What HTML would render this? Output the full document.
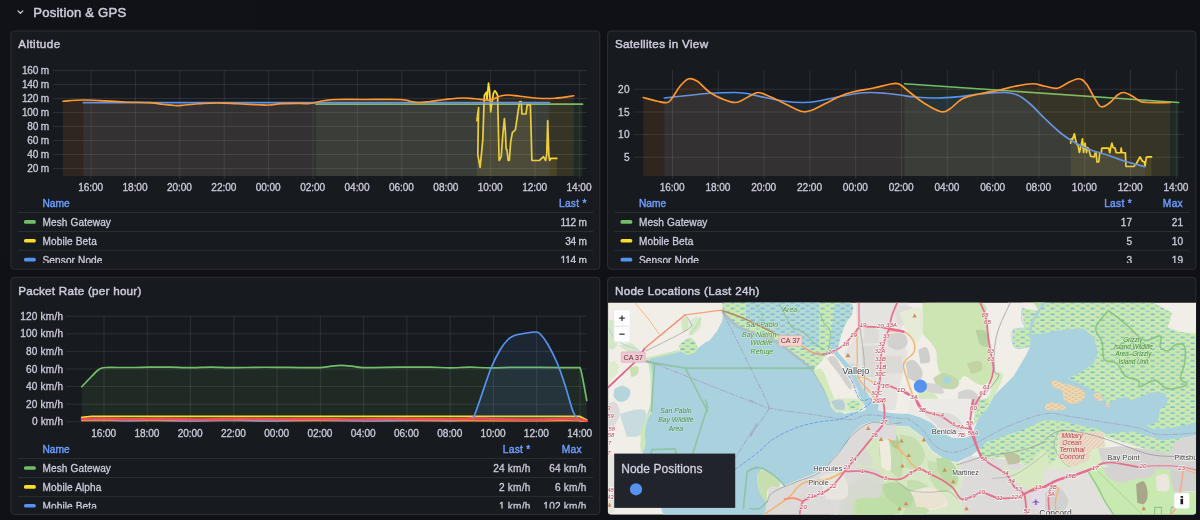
<!DOCTYPE html>
<html><head><meta charset="utf-8"><title>Position &amp; GPS</title>
<style>html,body{margin:0;padding:0;background:#111217;width:1200px;height:520px;overflow:hidden;font-family:"Liberation Sans",sans-serif}</style>
</head><body>
<svg width="1200" height="520" viewBox="0 0 1200 520" style="display:block;font-family:'Liberation Sans',sans-serif;will-change:transform;opacity:0.999">
<rect width="1200" height="520" fill="#111217"/>
<defs>
<clipPath id="lc1"><rect x="11" y="190" width="589" height="73"/></clipPath>
<clipPath id="lc2"><rect x="608" y="190" width="589" height="73"/></clipPath>
<clipPath id="lc3"><rect x="11" y="436" width="589" height="72.6"/></clipPath>
<clipPath id="mapclip"><path d="M608.1,302.8 H1196 V511.6 a3,3 0 0 1 -3,3 H611.1 a3,3 0 0 1 -3,-3 Z"/></clipPath>
<pattern id="wet" width="10" height="5.8" patternUnits="userSpaceOnUse"><rect width="10" height="5.8" fill="#cdebb0"/><rect x="0.5" y="0.6" width="4.2" height="1.0" fill="#3f97ea" opacity="0.9"/><rect x="5.6" y="3.5" width="4.0" height="1.0" fill="#5fa8e8" opacity="0.7"/></pattern>
<pattern id="wetb" width="10" height="5.8" patternUnits="userSpaceOnUse"><rect width="10" height="5.8" fill="#b6dbd4"/><rect x="0.5" y="0.6" width="4.4" height="1.0" fill="#4f9fe6" opacity="0.85"/><rect x="5.6" y="3.5" width="4.2" height="1.0" fill="#4f9fe6" opacity="0.7"/></pattern>
<pattern id="isl" width="7" height="4" patternUnits="userSpaceOnUse"><rect width="7" height="4" fill="#e9d9b6"/><rect x="0.5" y="0.8" width="3" height="0.8" fill="#e8a060" opacity="0.7"/><rect x="4" y="2.8" width="2.5" height="0.8" fill="#e8a060" opacity="0.7"/></pattern>
<pattern id="mil" width="3" height="3" patternUnits="userSpaceOnUse" patternTransform="rotate(45)"><rect width="3" height="3" fill="#ecdfc9"/><rect width="1" height="3" fill="#e8a9a0" opacity="0.45"/></pattern>
</defs>
<path d="M18.0,10.9 L20.4,13.3 L22.8,10.9" fill="none" stroke="#ccccdc" stroke-width="1.3" stroke-linecap="round" stroke-linejoin="round"/>
<text x="33.3" y="16.9" style="font-size:13.1px;fill:#ccccdc;stroke:#ccccdc;stroke-width:0.5px;letter-spacing:0.2px;" >Position &amp; GPS</text>
<rect x="10.9" y="31.0" width="588.9" height="238.3" rx="3.4" fill="#181b1f" stroke="#2d3037" stroke-width="1"/>
<text x="18.2" y="48.4" style="font-size:11.7px;fill:#ccccdc;stroke:#ccccdc;stroke-width:0.45px;" textLength="42.0" lengthAdjust="spacing">Altitude</text>
<rect x="607.6" y="31.0" width="588.3" height="238.3" rx="3.4" fill="#181b1f" stroke="#2d3037" stroke-width="1"/>
<text x="614.9" y="48.4" style="font-size:11.7px;fill:#ccccdc;stroke:#ccccdc;stroke-width:0.45px;" textLength="93.2" lengthAdjust="spacing">Satellites in View</text>
<rect x="10.9" y="277.3" width="588.9" height="237.2" rx="3.4" fill="#181b1f" stroke="#2d3037" stroke-width="1"/>
<text x="18.2" y="294.7" style="font-size:11.7px;fill:#ccccdc;stroke:#ccccdc;stroke-width:0.45px;" textLength="123.2" lengthAdjust="spacing">Packet Rate (per hour)</text>
<rect x="607.6" y="277.3" width="588.3" height="237.2" rx="3.4" fill="#181b1f" stroke="#2d3037" stroke-width="1"/>
<text x="614.9" y="294.7" style="font-size:11.7px;fill:#ccccdc;stroke:#ccccdc;stroke-width:0.45px;" textLength="144.6" lengthAdjust="spacing">Node Locations (Last 24h)</text>
<rect x="53" y="70.00" width="534.00" height="1" fill="rgba(240,250,255,0.10)"/>
<rect x="53" y="84.00" width="534.00" height="1" fill="rgba(240,250,255,0.10)"/>
<rect x="53" y="98.00" width="534.00" height="1" fill="rgba(240,250,255,0.10)"/>
<rect x="53" y="112.00" width="534.00" height="1" fill="rgba(240,250,255,0.10)"/>
<rect x="53" y="126.00" width="534.00" height="1" fill="rgba(240,250,255,0.10)"/>
<rect x="53" y="140.00" width="534.00" height="1" fill="rgba(240,250,255,0.10)"/>
<rect x="53" y="154.00" width="534.00" height="1" fill="rgba(240,250,255,0.10)"/>
<rect x="53" y="168.00" width="534.00" height="1" fill="rgba(240,250,255,0.10)"/>
<rect x="90.50" y="70.50" width="1" height="108.50" fill="rgba(240,250,255,0.10)"/>
<rect x="134.90" y="70.50" width="1" height="108.50" fill="rgba(240,250,255,0.10)"/>
<rect x="179.30" y="70.50" width="1" height="108.50" fill="rgba(240,250,255,0.10)"/>
<rect x="223.70" y="70.50" width="1" height="108.50" fill="rgba(240,250,255,0.10)"/>
<rect x="268.10" y="70.50" width="1" height="108.50" fill="rgba(240,250,255,0.10)"/>
<rect x="312.50" y="70.50" width="1" height="108.50" fill="rgba(240,250,255,0.10)"/>
<rect x="356.90" y="70.50" width="1" height="108.50" fill="rgba(240,250,255,0.10)"/>
<rect x="401.30" y="70.50" width="1" height="108.50" fill="rgba(240,250,255,0.10)"/>
<rect x="445.70" y="70.50" width="1" height="108.50" fill="rgba(240,250,255,0.10)"/>
<rect x="490.10" y="70.50" width="1" height="108.50" fill="rgba(240,250,255,0.10)"/>
<rect x="534.50" y="70.50" width="1" height="108.50" fill="rgba(240,250,255,0.10)"/>
<rect x="578.90" y="70.50" width="1" height="108.50" fill="rgba(240,250,255,0.10)"/>
<text x="49.0" y="74.1" text-anchor="end" style="font-size:10.1px;fill:#ccccdc;stroke:#ccccdc;stroke-width:0.3px;letter-spacing:-0.2px;" >160 m</text>
<text x="49.0" y="88.1" text-anchor="end" style="font-size:10.1px;fill:#ccccdc;stroke:#ccccdc;stroke-width:0.3px;letter-spacing:-0.2px;" >140 m</text>
<text x="49.0" y="102.1" text-anchor="end" style="font-size:10.1px;fill:#ccccdc;stroke:#ccccdc;stroke-width:0.3px;letter-spacing:-0.2px;" >120 m</text>
<text x="49.0" y="116.1" text-anchor="end" style="font-size:10.1px;fill:#ccccdc;stroke:#ccccdc;stroke-width:0.3px;letter-spacing:-0.2px;" >100 m</text>
<text x="49.0" y="130.1" text-anchor="end" style="font-size:10.1px;fill:#ccccdc;stroke:#ccccdc;stroke-width:0.3px;letter-spacing:-0.2px;" >80 m</text>
<text x="49.0" y="144.1" text-anchor="end" style="font-size:10.1px;fill:#ccccdc;stroke:#ccccdc;stroke-width:0.3px;letter-spacing:-0.2px;" >60 m</text>
<text x="49.0" y="158.1" text-anchor="end" style="font-size:10.1px;fill:#ccccdc;stroke:#ccccdc;stroke-width:0.3px;letter-spacing:-0.2px;" >40 m</text>
<text x="49.0" y="172.1" text-anchor="end" style="font-size:10.1px;fill:#ccccdc;stroke:#ccccdc;stroke-width:0.3px;letter-spacing:-0.2px;" >20 m</text>
<text x="90.6" y="191.2" text-anchor="middle" style="font-size:10.1px;fill:#ccccdc;stroke:#ccccdc;stroke-width:0.3px;letter-spacing:-0.08px;" >16:00</text>
<text x="135.0" y="191.2" text-anchor="middle" style="font-size:10.1px;fill:#ccccdc;stroke:#ccccdc;stroke-width:0.3px;letter-spacing:-0.08px;" >18:00</text>
<text x="179.4" y="191.2" text-anchor="middle" style="font-size:10.1px;fill:#ccccdc;stroke:#ccccdc;stroke-width:0.3px;letter-spacing:-0.08px;" >20:00</text>
<text x="223.79999999999998" y="191.2" text-anchor="middle" style="font-size:10.1px;fill:#ccccdc;stroke:#ccccdc;stroke-width:0.3px;letter-spacing:-0.08px;" >22:00</text>
<text x="268.20000000000005" y="191.2" text-anchor="middle" style="font-size:10.1px;fill:#ccccdc;stroke:#ccccdc;stroke-width:0.3px;letter-spacing:-0.08px;" >00:00</text>
<text x="312.6" y="191.2" text-anchor="middle" style="font-size:10.1px;fill:#ccccdc;stroke:#ccccdc;stroke-width:0.3px;letter-spacing:-0.08px;" >02:00</text>
<text x="357.0" y="191.2" text-anchor="middle" style="font-size:10.1px;fill:#ccccdc;stroke:#ccccdc;stroke-width:0.3px;letter-spacing:-0.08px;" >04:00</text>
<text x="401.40000000000003" y="191.2" text-anchor="middle" style="font-size:10.1px;fill:#ccccdc;stroke:#ccccdc;stroke-width:0.3px;letter-spacing:-0.08px;" >06:00</text>
<text x="445.8" y="191.2" text-anchor="middle" style="font-size:10.1px;fill:#ccccdc;stroke:#ccccdc;stroke-width:0.3px;letter-spacing:-0.08px;" >08:00</text>
<text x="490.2" y="191.2" text-anchor="middle" style="font-size:10.1px;fill:#ccccdc;stroke:#ccccdc;stroke-width:0.3px;letter-spacing:-0.08px;" >10:00</text>
<text x="534.6" y="191.2" text-anchor="middle" style="font-size:10.1px;fill:#ccccdc;stroke:#ccccdc;stroke-width:0.3px;letter-spacing:-0.08px;" >12:00</text>
<text x="579.0" y="191.2" text-anchor="middle" style="font-size:10.1px;fill:#ccccdc;stroke:#ccccdc;stroke-width:0.3px;letter-spacing:-0.08px;" >14:00</text>
<path d="M316,104.2 L582.5,104.2 L582.50,176 L316.00,176 Z" fill="#73bf69" fill-opacity="0.1" stroke="none"/>
<path d="M316,104.2 L582.5,104.2" fill="none" stroke="#73bf69" stroke-width="1.7" stroke-linejoin="round" stroke-linecap="round"/>
<path d="M476.90,120.70 L478.60,107.60 L477.80,154.60 L480.10,167.30 L482.80,139.80 L484.30,95.40 L486.40,92.20 L487.00,99.60 L488.50,83.10 L489.60,91.10 L490.70,111.90 L492.10,101.70 L493.40,93.30 L494.90,90.70 L496.40,92.80 L497.60,95.40 L498.50,133.40 L499.10,160.50 L501.20,156.70 L502.90,133.40 L504.40,118.60 L505.50,133.40 L506.10,149.30 L506.90,149.30 L508.20,160.50 L509.30,160.50 L510.70,141.90 L512.40,132.40 L513.90,131.30 L515.40,129.60 L517.50,115.50 L519.60,101.70 L521.30,101.70 L521.90,114.00 L526.00,114.00 L527.20,104.90 L530.40,104.90 L531.90,160.50 L539.30,160.50 L543.50,156.70 L545.60,160.50 L546.70,154.60 L547.70,120.70 L548.80,154.60 L549.60,160.50 L550.90,158.40 L556.80,158.40 L556.80,176 L476.90,176 Z" fill="#fade2a" fill-opacity="0.1" stroke="none"/>
<path d="M476.90,120.70 L478.60,107.60 L477.80,154.60 L480.10,167.30 L482.80,139.80 L484.30,95.40 L486.40,92.20 L487.00,99.60 L488.50,83.10 L489.60,91.10 L490.70,111.90 L492.10,101.70 L493.40,93.30 L494.90,90.70 L496.40,92.80 L497.60,95.40 L498.50,133.40 L499.10,160.50 L501.20,156.70 L502.90,133.40 L504.40,118.60 L505.50,133.40 L506.10,149.30 L506.90,149.30 L508.20,160.50 L509.30,160.50 L510.70,141.90 L512.40,132.40 L513.90,131.30 L515.40,129.60 L517.50,115.50 L519.60,101.70 L521.30,101.70 L521.90,114.00 L526.00,114.00 L527.20,104.90 L530.40,104.90 L531.90,160.50 L539.30,160.50 L543.50,156.70 L545.60,160.50 L546.70,154.60 L547.70,120.70 L548.80,154.60 L549.60,160.50 L550.90,158.40 L556.80,158.40" fill="none" stroke="#fade2a" stroke-width="1.7" stroke-linejoin="round" stroke-linecap="round"/>
<path d="M83.3,102.6 L549.5,102.6 L549.50,176 L83.30,176 Z" fill="#5794f2" fill-opacity="0.1" stroke="none"/>
<path d="M83.3,102.6 L549.5,102.6" fill="none" stroke="#5794f2" stroke-width="1.7" stroke-linejoin="round" stroke-linecap="round"/>
<path d="M63.00,101.25 C66.90,101.00 75.10,100.13 82.50,100.00 C89.90,99.87 91.50,100.20 100.00,100.60 C108.50,101.00 115.00,101.60 125.00,102.00 C135.00,102.40 142.50,102.15 150.00,102.60 C157.50,103.05 157.50,103.67 162.50,104.25 C167.50,104.83 170.50,105.35 175.00,105.50 C179.50,105.65 180.00,105.35 185.00,105.00 C190.00,104.65 193.50,104.15 200.00,103.75 C206.50,103.35 210.00,103.00 217.50,103.00 C225.00,103.00 229.50,103.40 237.50,103.75 C245.50,104.10 251.25,104.50 257.50,104.75 C263.75,105.00 263.75,105.21 268.75,105.00 C273.75,104.79 276.25,104.02 282.50,103.70 C288.75,103.38 294.50,103.44 300.00,103.40 C305.50,103.36 305.00,104.08 310.00,103.50 C315.00,102.92 319.50,101.30 325.00,100.50 C330.50,99.70 330.00,99.70 337.50,99.50 C345.00,99.30 350.00,99.50 362.50,99.50 C375.00,99.50 390.50,99.15 400.00,99.50 C409.50,99.85 406.25,100.65 410.00,101.25 C413.75,101.85 414.75,102.45 418.75,102.50 C422.75,102.55 424.75,102.10 430.00,101.50 C435.25,100.90 438.50,100.20 445.00,99.50 C451.50,98.80 456.50,98.15 462.50,98.00 C468.50,97.85 469.50,98.35 475.00,98.75 C480.50,99.15 485.00,100.50 490.00,100.00 C495.00,99.50 496.50,97.25 500.00,96.25 C503.50,95.25 503.50,95.00 507.50,95.00 C511.50,95.00 514.00,95.60 520.00,96.25 C526.00,96.90 530.50,97.85 537.50,98.25 C544.50,98.65 547.75,98.75 555.00,98.25 C562.25,97.75 570.00,96.25 573.75,95.75 L573.75,176 L63.00,176 Z" fill="#ff9830" fill-opacity="0.1" stroke="none"/>
<path d="M63.00,101.25 C66.90,101.00 75.10,100.13 82.50,100.00 C89.90,99.87 91.50,100.20 100.00,100.60 C108.50,101.00 115.00,101.60 125.00,102.00 C135.00,102.40 142.50,102.15 150.00,102.60 C157.50,103.05 157.50,103.67 162.50,104.25 C167.50,104.83 170.50,105.35 175.00,105.50 C179.50,105.65 180.00,105.35 185.00,105.00 C190.00,104.65 193.50,104.15 200.00,103.75 C206.50,103.35 210.00,103.00 217.50,103.00 C225.00,103.00 229.50,103.40 237.50,103.75 C245.50,104.10 251.25,104.50 257.50,104.75 C263.75,105.00 263.75,105.21 268.75,105.00 C273.75,104.79 276.25,104.02 282.50,103.70 C288.75,103.38 294.50,103.44 300.00,103.40 C305.50,103.36 305.00,104.08 310.00,103.50 C315.00,102.92 319.50,101.30 325.00,100.50 C330.50,99.70 330.00,99.70 337.50,99.50 C345.00,99.30 350.00,99.50 362.50,99.50 C375.00,99.50 390.50,99.15 400.00,99.50 C409.50,99.85 406.25,100.65 410.00,101.25 C413.75,101.85 414.75,102.45 418.75,102.50 C422.75,102.55 424.75,102.10 430.00,101.50 C435.25,100.90 438.50,100.20 445.00,99.50 C451.50,98.80 456.50,98.15 462.50,98.00 C468.50,97.85 469.50,98.35 475.00,98.75 C480.50,99.15 485.00,100.50 490.00,100.00 C495.00,99.50 496.50,97.25 500.00,96.25 C503.50,95.25 503.50,95.00 507.50,95.00 C511.50,95.00 514.00,95.60 520.00,96.25 C526.00,96.90 530.50,97.85 537.50,98.25 C544.50,98.65 547.75,98.75 555.00,98.25 C562.25,97.75 570.00,96.25 573.75,95.75" fill="none" stroke="#ff9830" stroke-width="1.7" stroke-linejoin="round" stroke-linecap="round"/>
<g clip-path="url(#lc1)">
<text x="42.5" y="206.6" style="font-size:10.2px;fill:#6e9fff;stroke:#6e9fff;stroke-width:0.4px;letter-spacing:0.0px;" >Name</text>
<text x="586.8" y="206.6" text-anchor="end" style="font-size:10.2px;fill:#6e9fff;stroke:#6e9fff;stroke-width:0.4px;letter-spacing:0.3px;" >Last *</text>
<rect x="18" y="212.10" width="575" height="0.9" fill="rgba(204,204,220,0.13)"/>
<rect x="24" y="220.10" width="11.8" height="3.6" rx="1.5" fill="#73bf69"/>
<text x="42.5" y="226.2" style="font-size:10.1px;fill:#ccccdc;stroke:#ccccdc;stroke-width:0.3px;letter-spacing:0.1px;" >Mesh Gateway</text>
<text x="586.8" y="226.2" text-anchor="end" style="font-size:10.1px;fill:#ccccdc;stroke:#ccccdc;stroke-width:0.3px;letter-spacing:-0.2px;" >112 m</text>
<rect x="18" y="230.95" width="575" height="0.9" fill="rgba(204,204,220,0.13)"/>
<rect x="24" y="238.95" width="11.8" height="3.6" rx="1.5" fill="#fade2a"/>
<text x="42.5" y="245.04999999999998" style="font-size:10.1px;fill:#ccccdc;stroke:#ccccdc;stroke-width:0.3px;letter-spacing:0.1px;" >Mobile Beta</text>
<text x="586.8" y="245.04999999999998" text-anchor="end" style="font-size:10.1px;fill:#ccccdc;stroke:#ccccdc;stroke-width:0.3px;letter-spacing:-0.2px;" >34 m</text>
<rect x="18" y="249.80" width="575" height="0.9" fill="rgba(204,204,220,0.13)"/>
<rect x="24" y="257.80" width="11.8" height="3.6" rx="1.5" fill="#5794f2"/>
<text x="42.5" y="263.9" style="font-size:10.1px;fill:#ccccdc;stroke:#ccccdc;stroke-width:0.3px;letter-spacing:0.1px;" >Sensor Node</text>
<text x="586.8" y="263.9" text-anchor="end" style="font-size:10.1px;fill:#ccccdc;stroke:#ccccdc;stroke-width:0.3px;letter-spacing:-0.2px;" >114 m</text>
</g>
<rect x="633.75" y="88.75" width="550.00" height="1" fill="rgba(240,250,255,0.10)"/>
<rect x="633.75" y="111.50" width="550.00" height="1" fill="rgba(240,250,255,0.10)"/>
<rect x="633.75" y="134.10" width="550.00" height="1" fill="rgba(240,250,255,0.10)"/>
<rect x="633.75" y="156.80" width="550.00" height="1" fill="rgba(240,250,255,0.10)"/>
<rect x="672.00" y="70.00" width="1" height="109.00" fill="rgba(240,250,255,0.10)"/>
<rect x="717.80" y="70.00" width="1" height="109.00" fill="rgba(240,250,255,0.10)"/>
<rect x="763.60" y="70.00" width="1" height="109.00" fill="rgba(240,250,255,0.10)"/>
<rect x="809.40" y="70.00" width="1" height="109.00" fill="rgba(240,250,255,0.10)"/>
<rect x="855.20" y="70.00" width="1" height="109.00" fill="rgba(240,250,255,0.10)"/>
<rect x="901.00" y="70.00" width="1" height="109.00" fill="rgba(240,250,255,0.10)"/>
<rect x="946.80" y="70.00" width="1" height="109.00" fill="rgba(240,250,255,0.10)"/>
<rect x="992.60" y="70.00" width="1" height="109.00" fill="rgba(240,250,255,0.10)"/>
<rect x="1038.40" y="70.00" width="1" height="109.00" fill="rgba(240,250,255,0.10)"/>
<rect x="1084.20" y="70.00" width="1" height="109.00" fill="rgba(240,250,255,0.10)"/>
<rect x="1130.00" y="70.00" width="1" height="109.00" fill="rgba(240,250,255,0.10)"/>
<rect x="1175.80" y="70.00" width="1" height="109.00" fill="rgba(240,250,255,0.10)"/>
<text x="630.2" y="92.85" text-anchor="end" style="font-size:10.1px;fill:#ccccdc;stroke:#ccccdc;stroke-width:0.3px;letter-spacing:0.5px;" >20</text>
<text x="630.2" y="115.6" text-anchor="end" style="font-size:10.1px;fill:#ccccdc;stroke:#ccccdc;stroke-width:0.3px;letter-spacing:0.5px;" >15</text>
<text x="630.2" y="138.2" text-anchor="end" style="font-size:10.1px;fill:#ccccdc;stroke:#ccccdc;stroke-width:0.3px;letter-spacing:0.5px;" >10</text>
<text x="630.2" y="160.9" text-anchor="end" style="font-size:10.1px;fill:#ccccdc;stroke:#ccccdc;stroke-width:0.3px;letter-spacing:0.5px;" >5</text>
<text x="672.1" y="191.2" text-anchor="middle" style="font-size:10.1px;fill:#ccccdc;stroke:#ccccdc;stroke-width:0.3px;letter-spacing:-0.08px;" >16:00</text>
<text x="717.9" y="191.2" text-anchor="middle" style="font-size:10.1px;fill:#ccccdc;stroke:#ccccdc;stroke-width:0.3px;letter-spacing:-0.08px;" >18:00</text>
<text x="763.7" y="191.2" text-anchor="middle" style="font-size:10.1px;fill:#ccccdc;stroke:#ccccdc;stroke-width:0.3px;letter-spacing:-0.08px;" >20:00</text>
<text x="809.5" y="191.2" text-anchor="middle" style="font-size:10.1px;fill:#ccccdc;stroke:#ccccdc;stroke-width:0.3px;letter-spacing:-0.08px;" >22:00</text>
<text x="855.3000000000001" y="191.2" text-anchor="middle" style="font-size:10.1px;fill:#ccccdc;stroke:#ccccdc;stroke-width:0.3px;letter-spacing:-0.08px;" >00:00</text>
<text x="901.1" y="191.2" text-anchor="middle" style="font-size:10.1px;fill:#ccccdc;stroke:#ccccdc;stroke-width:0.3px;letter-spacing:-0.08px;" >02:00</text>
<text x="946.9" y="191.2" text-anchor="middle" style="font-size:10.1px;fill:#ccccdc;stroke:#ccccdc;stroke-width:0.3px;letter-spacing:-0.08px;" >04:00</text>
<text x="992.6999999999999" y="191.2" text-anchor="middle" style="font-size:10.1px;fill:#ccccdc;stroke:#ccccdc;stroke-width:0.3px;letter-spacing:-0.08px;" >06:00</text>
<text x="1038.5" y="191.2" text-anchor="middle" style="font-size:10.1px;fill:#ccccdc;stroke:#ccccdc;stroke-width:0.3px;letter-spacing:-0.08px;" >08:00</text>
<text x="1084.3" y="191.2" text-anchor="middle" style="font-size:10.1px;fill:#ccccdc;stroke:#ccccdc;stroke-width:0.3px;letter-spacing:-0.08px;" >10:00</text>
<text x="1130.1" y="191.2" text-anchor="middle" style="font-size:10.1px;fill:#ccccdc;stroke:#ccccdc;stroke-width:0.3px;letter-spacing:-0.08px;" >12:00</text>
<text x="1175.8999999999999" y="191.2" text-anchor="middle" style="font-size:10.1px;fill:#ccccdc;stroke:#ccccdc;stroke-width:0.3px;letter-spacing:-0.08px;" >14:00</text>
<path d="M904.5,83.75 L1178.75,102.5 L1178.75,176 L904.50,176 Z" fill="#73bf69" fill-opacity="0.1" stroke="none"/>
<path d="M904.5,83.75 L1178.75,102.5" fill="none" stroke="#73bf69" stroke-width="1.7" stroke-linejoin="round" stroke-linecap="round"/>
<path d="M1070.62,143.12 L1071.25,138.75 L1072.50,139.38 L1074.38,133.75 L1075.62,140.00 L1076.88,144.38 L1078.12,145.00 L1079.38,152.50 L1081.25,145.00 L1082.50,138.75 L1083.50,152.50 L1085.00,143.12 L1086.50,152.50 L1087.50,147.50 L1088.75,148.75 L1090.62,156.25 L1094.38,156.88 L1095.00,153.12 L1096.25,153.12 L1096.88,161.88 L1098.75,161.88 L1099.75,153.12 L1101.25,152.75 L1101.88,148.12 L1108.75,148.12 L1109.75,152.75 L1110.62,148.12 L1111.88,143.12 L1113.12,147.50 L1115.00,148.12 L1116.25,152.75 L1120.62,152.75 L1121.25,148.12 L1121.88,152.75 L1125.38,152.75 L1126.00,166.50 L1133.75,166.50 L1136.25,163.75 L1140.00,156.88 L1142.50,161.25 L1144.38,161.88 L1145.00,166.00 L1146.25,157.50 L1147.50,156.88 L1151.50,156.88 L1151.50,176 L1070.62,176 Z" fill="#fade2a" fill-opacity="0.1" stroke="none"/>
<path d="M1070.62,143.12 L1071.25,138.75 L1072.50,139.38 L1074.38,133.75 L1075.62,140.00 L1076.88,144.38 L1078.12,145.00 L1079.38,152.50 L1081.25,145.00 L1082.50,138.75 L1083.50,152.50 L1085.00,143.12 L1086.50,152.50 L1087.50,147.50 L1088.75,148.75 L1090.62,156.25 L1094.38,156.88 L1095.00,153.12 L1096.25,153.12 L1096.88,161.88 L1098.75,161.88 L1099.75,153.12 L1101.25,152.75 L1101.88,148.12 L1108.75,148.12 L1109.75,152.75 L1110.62,148.12 L1111.88,143.12 L1113.12,147.50 L1115.00,148.12 L1116.25,152.75 L1120.62,152.75 L1121.25,148.12 L1121.88,152.75 L1125.38,152.75 L1126.00,166.50 L1133.75,166.50 L1136.25,163.75 L1140.00,156.88 L1142.50,161.25 L1144.38,161.88 L1145.00,166.00 L1146.25,157.50 L1147.50,156.88 L1151.50,156.88" fill="none" stroke="#fade2a" stroke-width="1.7" stroke-linejoin="round" stroke-linecap="round"/>
<path d="M664.25,98.00 C668.43,97.55 679.26,96.36 687.50,95.50 C695.74,94.64 701.90,93.79 710.00,93.25 C718.10,92.71 726.20,92.50 732.50,92.50 C738.80,92.50 739.15,92.35 745.00,93.25 C750.85,94.15 757.80,96.06 765.00,97.50 C772.20,98.94 778.25,100.35 785.00,101.25 C791.75,102.15 796.65,102.50 802.50,102.50 C808.35,102.50 811.20,102.24 817.50,101.25 C823.80,100.26 830.75,98.35 837.50,97.00 C844.25,95.65 849.15,94.56 855.00,93.75 C860.85,92.94 864.60,92.59 870.00,92.50 C875.40,92.41 879.60,92.80 885.00,93.25 C890.40,93.70 894.60,94.33 900.00,95.00 C905.40,95.67 908.25,96.46 915.00,97.00 C921.75,97.54 929.85,98.05 937.50,98.00 C945.15,97.95 949.40,97.52 957.50,96.75 C965.60,95.98 973.95,94.52 982.50,93.75 C991.05,92.98 998.70,92.28 1005.00,92.50 C1011.30,92.72 1013.00,92.97 1017.50,95.00 C1022.00,97.03 1025.05,99.47 1030.00,103.75 C1034.95,108.03 1039.60,113.58 1045.00,118.75 C1050.40,123.92 1055.05,128.45 1060.00,132.50 C1064.95,136.55 1067.55,138.32 1072.50,141.25 C1077.45,144.18 1081.20,146.28 1087.50,148.75 C1093.80,151.22 1100.75,152.75 1107.50,155.00 C1114.25,157.25 1118.25,159.13 1125.00,161.25 C1131.75,163.37 1141.40,165.76 1145.00,166.75 L1145.00,176 L664.25,176 Z" fill="#5794f2" fill-opacity="0.1" stroke="none"/>
<path d="M664.25,98.00 C668.43,97.55 679.26,96.36 687.50,95.50 C695.74,94.64 701.90,93.79 710.00,93.25 C718.10,92.71 726.20,92.50 732.50,92.50 C738.80,92.50 739.15,92.35 745.00,93.25 C750.85,94.15 757.80,96.06 765.00,97.50 C772.20,98.94 778.25,100.35 785.00,101.25 C791.75,102.15 796.65,102.50 802.50,102.50 C808.35,102.50 811.20,102.24 817.50,101.25 C823.80,100.26 830.75,98.35 837.50,97.00 C844.25,95.65 849.15,94.56 855.00,93.75 C860.85,92.94 864.60,92.59 870.00,92.50 C875.40,92.41 879.60,92.80 885.00,93.25 C890.40,93.70 894.60,94.33 900.00,95.00 C905.40,95.67 908.25,96.46 915.00,97.00 C921.75,97.54 929.85,98.05 937.50,98.00 C945.15,97.95 949.40,97.52 957.50,96.75 C965.60,95.98 973.95,94.52 982.50,93.75 C991.05,92.98 998.70,92.28 1005.00,92.50 C1011.30,92.72 1013.00,92.97 1017.50,95.00 C1022.00,97.03 1025.05,99.47 1030.00,103.75 C1034.95,108.03 1039.60,113.58 1045.00,118.75 C1050.40,123.92 1055.05,128.45 1060.00,132.50 C1064.95,136.55 1067.55,138.32 1072.50,141.25 C1077.45,144.18 1081.20,146.28 1087.50,148.75 C1093.80,151.22 1100.75,152.75 1107.50,155.00 C1114.25,157.25 1118.25,159.13 1125.00,161.25 C1131.75,163.37 1141.40,165.76 1145.00,166.75" fill="none" stroke="#5794f2" stroke-width="1.7" stroke-linejoin="round" stroke-linecap="round"/>
<path d="M643.25,97.50 C645.82,98.17 653.13,100.35 657.50,101.25 C661.87,102.15 664.80,103.17 667.50,102.50 C670.20,101.83 670.25,100.42 672.50,97.50 C674.75,94.58 677.08,89.62 680.00,86.25 C682.92,82.88 685.60,79.65 688.75,78.75 C691.90,77.85 693.67,78.78 697.50,81.25 C701.33,83.72 705.05,89.12 710.00,92.50 C714.95,95.88 720.50,98.20 725.00,100.00 C729.50,101.80 731.85,102.50 735.00,102.50 C738.15,102.50 739.35,101.44 742.50,100.00 C745.65,98.56 749.58,95.85 752.50,94.50 C755.42,93.15 756.27,92.41 758.75,92.50 C761.23,92.59 762.42,93.42 766.25,95.00 C770.08,96.58 774.83,98.78 780.00,101.25 C785.17,103.72 790.73,106.86 795.00,108.75 C799.27,110.64 800.60,111.53 803.75,111.75 C806.90,111.97 808.67,111.44 812.50,110.00 C816.33,108.56 820.05,106.22 825.00,103.75 C829.95,101.28 835.05,98.36 840.00,96.25 C844.95,94.14 846.65,93.44 852.50,92.00 C858.35,90.56 865.30,89.73 872.50,88.25 C879.70,86.77 887.55,84.42 892.50,83.75 C897.45,83.08 896.85,82.92 900.00,84.50 C903.15,86.08 905.50,89.03 910.00,92.50 C914.50,95.97 919.38,100.28 925.00,103.75 C930.62,107.22 936.75,110.85 941.25,111.75 C945.75,112.65 946.17,111.09 950.00,108.75 C953.83,106.41 957.10,101.45 962.50,98.75 C967.90,96.05 973.25,95.33 980.00,93.75 C986.75,92.17 993.70,91.35 1000.00,90.00 C1006.30,88.65 1009.15,87.38 1015.00,86.25 C1020.85,85.12 1027.10,83.75 1032.50,83.75 C1037.90,83.75 1040.50,85.44 1045.00,86.25 C1049.50,87.06 1053.45,88.83 1057.50,88.25 C1061.55,87.67 1063.67,84.71 1067.50,83.00 C1071.33,81.29 1075.38,78.61 1078.75,78.75 C1082.12,78.89 1083.33,80.15 1086.25,83.75 C1089.17,87.35 1092.30,94.61 1095.00,98.75 C1097.70,102.89 1098.55,106.08 1101.25,106.75 C1103.95,107.42 1107.08,104.61 1110.00,102.50 C1112.92,100.39 1115.03,96.80 1117.50,95.00 C1119.97,93.20 1121.05,92.28 1123.75,92.50 C1126.45,92.72 1129.58,94.67 1132.50,96.25 C1135.42,97.83 1137.30,100.12 1140.00,101.25 C1142.70,102.38 1142.10,102.28 1147.50,102.50 C1152.90,102.72 1165.95,102.50 1170.00,102.50 L1170.00,176 L643.25,176 Z" fill="#ff9830" fill-opacity="0.1" stroke="none"/>
<path d="M643.25,97.50 C645.82,98.17 653.13,100.35 657.50,101.25 C661.87,102.15 664.80,103.17 667.50,102.50 C670.20,101.83 670.25,100.42 672.50,97.50 C674.75,94.58 677.08,89.62 680.00,86.25 C682.92,82.88 685.60,79.65 688.75,78.75 C691.90,77.85 693.67,78.78 697.50,81.25 C701.33,83.72 705.05,89.12 710.00,92.50 C714.95,95.88 720.50,98.20 725.00,100.00 C729.50,101.80 731.85,102.50 735.00,102.50 C738.15,102.50 739.35,101.44 742.50,100.00 C745.65,98.56 749.58,95.85 752.50,94.50 C755.42,93.15 756.27,92.41 758.75,92.50 C761.23,92.59 762.42,93.42 766.25,95.00 C770.08,96.58 774.83,98.78 780.00,101.25 C785.17,103.72 790.73,106.86 795.00,108.75 C799.27,110.64 800.60,111.53 803.75,111.75 C806.90,111.97 808.67,111.44 812.50,110.00 C816.33,108.56 820.05,106.22 825.00,103.75 C829.95,101.28 835.05,98.36 840.00,96.25 C844.95,94.14 846.65,93.44 852.50,92.00 C858.35,90.56 865.30,89.73 872.50,88.25 C879.70,86.77 887.55,84.42 892.50,83.75 C897.45,83.08 896.85,82.92 900.00,84.50 C903.15,86.08 905.50,89.03 910.00,92.50 C914.50,95.97 919.38,100.28 925.00,103.75 C930.62,107.22 936.75,110.85 941.25,111.75 C945.75,112.65 946.17,111.09 950.00,108.75 C953.83,106.41 957.10,101.45 962.50,98.75 C967.90,96.05 973.25,95.33 980.00,93.75 C986.75,92.17 993.70,91.35 1000.00,90.00 C1006.30,88.65 1009.15,87.38 1015.00,86.25 C1020.85,85.12 1027.10,83.75 1032.50,83.75 C1037.90,83.75 1040.50,85.44 1045.00,86.25 C1049.50,87.06 1053.45,88.83 1057.50,88.25 C1061.55,87.67 1063.67,84.71 1067.50,83.00 C1071.33,81.29 1075.38,78.61 1078.75,78.75 C1082.12,78.89 1083.33,80.15 1086.25,83.75 C1089.17,87.35 1092.30,94.61 1095.00,98.75 C1097.70,102.89 1098.55,106.08 1101.25,106.75 C1103.95,107.42 1107.08,104.61 1110.00,102.50 C1112.92,100.39 1115.03,96.80 1117.50,95.00 C1119.97,93.20 1121.05,92.28 1123.75,92.50 C1126.45,92.72 1129.58,94.67 1132.50,96.25 C1135.42,97.83 1137.30,100.12 1140.00,101.25 C1142.70,102.38 1142.10,102.28 1147.50,102.50 C1152.90,102.72 1165.95,102.50 1170.00,102.50" fill="none" stroke="#ff9830" stroke-width="1.7" stroke-linejoin="round" stroke-linecap="round"/>
<g clip-path="url(#lc2)">
<text x="639.0" y="206.6" style="font-size:10.2px;fill:#6e9fff;stroke:#6e9fff;stroke-width:0.4px;letter-spacing:0.0px;" >Name</text>
<text x="1132" y="206.6" text-anchor="end" style="font-size:10.2px;fill:#6e9fff;stroke:#6e9fff;stroke-width:0.4px;letter-spacing:0.3px;" >Last *</text>
<text x="1183" y="206.6" text-anchor="end" style="font-size:10.2px;fill:#6e9fff;stroke:#6e9fff;stroke-width:0.4px;letter-spacing:0.3px;" >Max</text>
<rect x="614.5" y="212.10" width="575.0" height="0.9" fill="rgba(204,204,220,0.13)"/>
<rect x="620.5" y="220.10" width="11.8" height="3.6" rx="1.5" fill="#73bf69"/>
<text x="639.0" y="226.2" style="font-size:10.1px;fill:#ccccdc;stroke:#ccccdc;stroke-width:0.3px;letter-spacing:0.1px;" >Mesh Gateway</text>
<text x="1132" y="226.2" text-anchor="end" style="font-size:10.1px;fill:#ccccdc;stroke:#ccccdc;stroke-width:0.3px;letter-spacing:0px;" >17</text>
<text x="1183" y="226.2" text-anchor="end" style="font-size:10.1px;fill:#ccccdc;stroke:#ccccdc;stroke-width:0.3px;letter-spacing:0px;" >21</text>
<rect x="614.5" y="230.95" width="575.0" height="0.9" fill="rgba(204,204,220,0.13)"/>
<rect x="620.5" y="238.95" width="11.8" height="3.6" rx="1.5" fill="#fade2a"/>
<text x="639.0" y="245.04999999999998" style="font-size:10.1px;fill:#ccccdc;stroke:#ccccdc;stroke-width:0.3px;letter-spacing:0.1px;" >Mobile Beta</text>
<text x="1132" y="245.04999999999998" text-anchor="end" style="font-size:10.1px;fill:#ccccdc;stroke:#ccccdc;stroke-width:0.3px;letter-spacing:0px;" >5</text>
<text x="1183" y="245.04999999999998" text-anchor="end" style="font-size:10.1px;fill:#ccccdc;stroke:#ccccdc;stroke-width:0.3px;letter-spacing:0px;" >10</text>
<rect x="614.5" y="249.80" width="575.0" height="0.9" fill="rgba(204,204,220,0.13)"/>
<rect x="620.5" y="257.80" width="11.8" height="3.6" rx="1.5" fill="#5794f2"/>
<text x="639.0" y="263.9" style="font-size:10.1px;fill:#ccccdc;stroke:#ccccdc;stroke-width:0.3px;letter-spacing:0.1px;" >Sensor Node</text>
<text x="1132" y="263.9" text-anchor="end" style="font-size:10.1px;fill:#ccccdc;stroke:#ccccdc;stroke-width:0.3px;letter-spacing:0px;" >3</text>
<text x="1183" y="263.9" text-anchor="end" style="font-size:10.1px;fill:#ccccdc;stroke:#ccccdc;stroke-width:0.3px;letter-spacing:0px;" >19</text>
</g>
<rect x="66.25" y="315.75" width="520.75" height="1" fill="rgba(240,250,255,0.10)"/>
<rect x="66.25" y="333.33" width="520.75" height="1" fill="rgba(240,250,255,0.10)"/>
<rect x="66.25" y="350.91" width="520.75" height="1" fill="rgba(240,250,255,0.10)"/>
<rect x="66.25" y="368.49" width="520.75" height="1" fill="rgba(240,250,255,0.10)"/>
<rect x="66.25" y="386.07" width="520.75" height="1" fill="rgba(240,250,255,0.10)"/>
<rect x="66.25" y="403.65" width="520.75" height="1" fill="rgba(240,250,255,0.10)"/>
<rect x="66.25" y="421.23" width="520.75" height="1" fill="rgba(240,250,255,0.10)"/>
<rect x="103.50" y="316.25" width="1" height="108.75" fill="rgba(240,250,255,0.10)"/>
<rect x="146.77" y="316.25" width="1" height="108.75" fill="rgba(240,250,255,0.10)"/>
<rect x="190.04" y="316.25" width="1" height="108.75" fill="rgba(240,250,255,0.10)"/>
<rect x="233.31" y="316.25" width="1" height="108.75" fill="rgba(240,250,255,0.10)"/>
<rect x="276.58" y="316.25" width="1" height="108.75" fill="rgba(240,250,255,0.10)"/>
<rect x="319.85" y="316.25" width="1" height="108.75" fill="rgba(240,250,255,0.10)"/>
<rect x="363.12" y="316.25" width="1" height="108.75" fill="rgba(240,250,255,0.10)"/>
<rect x="406.39" y="316.25" width="1" height="108.75" fill="rgba(240,250,255,0.10)"/>
<rect x="449.66" y="316.25" width="1" height="108.75" fill="rgba(240,250,255,0.10)"/>
<rect x="492.93" y="316.25" width="1" height="108.75" fill="rgba(240,250,255,0.10)"/>
<rect x="536.20" y="316.25" width="1" height="108.75" fill="rgba(240,250,255,0.10)"/>
<rect x="579.47" y="316.25" width="1" height="108.75" fill="rgba(240,250,255,0.10)"/>
<text x="63.2" y="319.85" text-anchor="end" style="font-size:10.1px;fill:#ccccdc;stroke:#ccccdc;stroke-width:0.3px;letter-spacing:0.17px;" >120 km/h</text>
<text x="63.2" y="337.43" text-anchor="end" style="font-size:10.1px;fill:#ccccdc;stroke:#ccccdc;stroke-width:0.3px;letter-spacing:0.17px;" >100 km/h</text>
<text x="63.2" y="355.01" text-anchor="end" style="font-size:10.1px;fill:#ccccdc;stroke:#ccccdc;stroke-width:0.3px;letter-spacing:0.17px;" >80 km/h</text>
<text x="63.2" y="372.59000000000003" text-anchor="end" style="font-size:10.1px;fill:#ccccdc;stroke:#ccccdc;stroke-width:0.3px;letter-spacing:0.17px;" >60 km/h</text>
<text x="63.2" y="390.17" text-anchor="end" style="font-size:10.1px;fill:#ccccdc;stroke:#ccccdc;stroke-width:0.3px;letter-spacing:0.17px;" >40 km/h</text>
<text x="63.2" y="407.75" text-anchor="end" style="font-size:10.1px;fill:#ccccdc;stroke:#ccccdc;stroke-width:0.3px;letter-spacing:0.17px;" >20 km/h</text>
<text x="63.2" y="425.33000000000004" text-anchor="end" style="font-size:10.1px;fill:#ccccdc;stroke:#ccccdc;stroke-width:0.3px;letter-spacing:0.17px;" >0 km/h</text>
<text x="103.6" y="437.0" text-anchor="middle" style="font-size:10.1px;fill:#ccccdc;stroke:#ccccdc;stroke-width:0.3px;letter-spacing:-0.08px;" >16:00</text>
<text x="146.87" y="437.0" text-anchor="middle" style="font-size:10.1px;fill:#ccccdc;stroke:#ccccdc;stroke-width:0.3px;letter-spacing:-0.08px;" >18:00</text>
<text x="190.14000000000001" y="437.0" text-anchor="middle" style="font-size:10.1px;fill:#ccccdc;stroke:#ccccdc;stroke-width:0.3px;letter-spacing:-0.08px;" >20:00</text>
<text x="233.41" y="437.0" text-anchor="middle" style="font-size:10.1px;fill:#ccccdc;stroke:#ccccdc;stroke-width:0.3px;letter-spacing:-0.08px;" >22:00</text>
<text x="276.68000000000006" y="437.0" text-anchor="middle" style="font-size:10.1px;fill:#ccccdc;stroke:#ccccdc;stroke-width:0.3px;letter-spacing:-0.08px;" >00:00</text>
<text x="319.95000000000005" y="437.0" text-anchor="middle" style="font-size:10.1px;fill:#ccccdc;stroke:#ccccdc;stroke-width:0.3px;letter-spacing:-0.08px;" >02:00</text>
<text x="363.22" y="437.0" text-anchor="middle" style="font-size:10.1px;fill:#ccccdc;stroke:#ccccdc;stroke-width:0.3px;letter-spacing:-0.08px;" >04:00</text>
<text x="406.49000000000007" y="437.0" text-anchor="middle" style="font-size:10.1px;fill:#ccccdc;stroke:#ccccdc;stroke-width:0.3px;letter-spacing:-0.08px;" >06:00</text>
<text x="449.76000000000005" y="437.0" text-anchor="middle" style="font-size:10.1px;fill:#ccccdc;stroke:#ccccdc;stroke-width:0.3px;letter-spacing:-0.08px;" >08:00</text>
<text x="493.03000000000003" y="437.0" text-anchor="middle" style="font-size:10.1px;fill:#ccccdc;stroke:#ccccdc;stroke-width:0.3px;letter-spacing:-0.08px;" >10:00</text>
<text x="536.3000000000001" y="437.0" text-anchor="middle" style="font-size:10.1px;fill:#ccccdc;stroke:#ccccdc;stroke-width:0.3px;letter-spacing:-0.08px;" >12:00</text>
<text x="579.57" y="437.0" text-anchor="middle" style="font-size:10.1px;fill:#ccccdc;stroke:#ccccdc;stroke-width:0.3px;letter-spacing:-0.08px;" >14:00</text>
<path d="M81.75,386.75 C82.99,385.44 87.71,380.36 90.00,378.00 C92.29,375.64 95.31,372.45 97.00,371.00 C98.69,369.55 99.90,368.82 101.25,368.30 C102.60,367.78 101.69,367.62 106.00,367.50 C110.31,367.38 123.40,367.56 130.00,367.50 C136.60,367.44 144.00,367.16 150.00,367.10 C156.00,367.04 164.00,367.01 170.00,367.10 C176.00,367.19 183.85,367.70 190.00,367.70 C196.15,367.70 204.70,367.10 211.00,367.10 C217.30,367.10 225.40,367.67 232.00,367.70 C238.60,367.73 248.25,367.36 255.00,367.30 C261.75,367.24 270.25,367.25 277.00,367.30 C283.75,367.35 293.55,367.56 300.00,367.60 C306.45,367.65 315.50,367.80 320.00,367.60 C324.50,367.41 326.85,366.63 330.00,366.30 C333.15,365.97 337.70,365.41 341.00,365.40 C344.30,365.38 348.70,365.87 352.00,366.20 C355.30,366.53 355.80,367.45 363.00,367.60 C370.20,367.75 389.95,367.26 400.00,367.20 C410.05,367.14 422.50,367.11 430.00,367.20 C437.50,367.29 444.00,367.80 450.00,367.80 C456.00,367.80 464.00,367.20 470.00,367.20 C476.00,367.20 482.50,367.79 490.00,367.80 C497.50,367.81 509.50,367.33 520.00,367.30 C530.50,367.27 551.30,367.56 560.00,367.60 C568.70,367.65 574.92,367.39 578.00,367.60 C581.08,367.81 579.75,367.14 580.50,369.00 C581.25,370.86 582.06,375.27 583.00,380.00 C583.94,384.73 586.19,397.43 586.75,400.50 L586.75,422 L81.75,422 Z" fill="#73bf69" fill-opacity="0.1" stroke="none"/>
<path d="M81.75,386.75 C82.99,385.44 87.71,380.36 90.00,378.00 C92.29,375.64 95.31,372.45 97.00,371.00 C98.69,369.55 99.90,368.82 101.25,368.30 C102.60,367.78 101.69,367.62 106.00,367.50 C110.31,367.38 123.40,367.56 130.00,367.50 C136.60,367.44 144.00,367.16 150.00,367.10 C156.00,367.04 164.00,367.01 170.00,367.10 C176.00,367.19 183.85,367.70 190.00,367.70 C196.15,367.70 204.70,367.10 211.00,367.10 C217.30,367.10 225.40,367.67 232.00,367.70 C238.60,367.73 248.25,367.36 255.00,367.30 C261.75,367.24 270.25,367.25 277.00,367.30 C283.75,367.35 293.55,367.56 300.00,367.60 C306.45,367.65 315.50,367.80 320.00,367.60 C324.50,367.41 326.85,366.63 330.00,366.30 C333.15,365.97 337.70,365.41 341.00,365.40 C344.30,365.38 348.70,365.87 352.00,366.20 C355.30,366.53 355.80,367.45 363.00,367.60 C370.20,367.75 389.95,367.26 400.00,367.20 C410.05,367.14 422.50,367.11 430.00,367.20 C437.50,367.29 444.00,367.80 450.00,367.80 C456.00,367.80 464.00,367.20 470.00,367.20 C476.00,367.20 482.50,367.79 490.00,367.80 C497.50,367.81 509.50,367.33 520.00,367.30 C530.50,367.27 551.30,367.56 560.00,367.60 C568.70,367.65 574.92,367.39 578.00,367.60 C581.08,367.81 579.75,367.14 580.50,369.00 C581.25,370.86 582.06,375.27 583.00,380.00 C583.94,384.73 586.19,397.43 586.75,400.50" fill="none" stroke="#73bf69" stroke-width="1.7" stroke-linejoin="round" stroke-linecap="round"/>
<path d="M81.75,417.4 L92,416.3 L579.5,416.3 L586.75,420 L586.75,422 L81.75,422 Z" fill="#fade2a" fill-opacity="0.1" stroke="none"/>
<path d="M81.75,417.4 L92,416.3 L579.5,416.3 L586.75,420" fill="none" stroke="#fade2a" stroke-width="1.7" stroke-linejoin="round" stroke-linecap="round"/>
<path d="M81.75,420.30 C84.49,420.19 93.51,419.50 100.00,419.60 C106.49,419.71 117.50,420.91 125.00,421.00 C132.50,421.09 140.25,420.17 150.00,420.20 C159.75,420.23 178.00,421.23 190.00,421.20 C202.00,421.17 218.00,420.00 230.00,420.00 C242.00,420.00 256.50,421.17 270.00,421.20 C283.50,421.23 305.00,420.20 320.00,420.20 C335.00,420.20 355.00,421.19 370.00,421.20 C385.00,421.21 407.25,420.33 420.00,420.30 C432.75,420.27 447.12,421.42 455.00,421.00 C462.88,420.58 469.50,418.59 472.50,417.50 C475.50,416.41 473.50,417.50 475.00,413.75 C476.50,410.00 480.06,399.44 482.50,392.50 C484.94,385.56 488.62,373.88 491.25,367.50 C493.88,361.12 497.56,354.12 500.00,350.00 C502.44,345.88 505.44,342.14 507.50,340.00 C509.56,337.86 511.12,336.76 513.75,335.75 C516.38,334.74 521.62,333.81 525.00,333.25 C528.38,332.69 534.00,331.93 536.25,332.00 C538.50,332.07 538.31,331.99 540.00,333.75 C541.69,335.51 544.88,339.25 547.50,343.75 C550.12,348.25 554.88,357.56 557.50,363.75 C560.12,369.94 562.75,378.06 565.00,385.00 C567.25,391.94 570.81,405.20 572.50,410.00 C574.19,414.80 575.12,415.43 576.25,417.00 C577.38,418.57 578.42,419.87 580.00,420.50 C581.58,421.13 585.74,421.09 586.75,421.20 L586.75,422 L81.75,422 Z" fill="#5794f2" fill-opacity="0.1" stroke="none"/>
<path d="M81.75,420.30 C84.49,420.19 93.51,419.50 100.00,419.60 C106.49,419.71 117.50,420.91 125.00,421.00 C132.50,421.09 140.25,420.17 150.00,420.20 C159.75,420.23 178.00,421.23 190.00,421.20 C202.00,421.17 218.00,420.00 230.00,420.00 C242.00,420.00 256.50,421.17 270.00,421.20 C283.50,421.23 305.00,420.20 320.00,420.20 C335.00,420.20 355.00,421.19 370.00,421.20 C385.00,421.21 407.25,420.33 420.00,420.30 C432.75,420.27 447.12,421.42 455.00,421.00 C462.88,420.58 469.50,418.59 472.50,417.50 C475.50,416.41 473.50,417.50 475.00,413.75 C476.50,410.00 480.06,399.44 482.50,392.50 C484.94,385.56 488.62,373.88 491.25,367.50 C493.88,361.12 497.56,354.12 500.00,350.00 C502.44,345.88 505.44,342.14 507.50,340.00 C509.56,337.86 511.12,336.76 513.75,335.75 C516.38,334.74 521.62,333.81 525.00,333.25 C528.38,332.69 534.00,331.93 536.25,332.00 C538.50,332.07 538.31,331.99 540.00,333.75 C541.69,335.51 544.88,339.25 547.50,343.75 C550.12,348.25 554.88,357.56 557.50,363.75 C560.12,369.94 562.75,378.06 565.00,385.00 C567.25,391.94 570.81,405.20 572.50,410.00 C574.19,414.80 575.12,415.43 576.25,417.00 C577.38,418.57 578.42,419.87 580.00,420.50 C581.58,421.13 585.74,421.09 586.75,421.20" fill="none" stroke="#5794f2" stroke-width="1.7" stroke-linejoin="round" stroke-linecap="round"/>
<path d="M81.75,420.40 C87.49,420.31 106.76,419.83 120.00,419.80 C133.24,419.77 153.50,420.21 170.00,420.20 C186.50,420.19 210.50,419.69 230.00,419.70 C249.50,419.71 280.50,420.29 300.00,420.30 C319.50,420.31 340.50,419.80 360.00,419.80 C379.50,419.80 409.00,420.15 430.00,420.30 C451.00,420.45 483.50,420.71 500.00,420.80 C516.50,420.89 529.50,420.94 540.00,420.90 C550.50,420.85 562.99,420.41 570.00,420.50 C577.01,420.59 584.24,421.35 586.75,421.50 L586.75,422 L81.75,422 Z" fill="#ff9830" fill-opacity="0.1" stroke="none"/>
<path d="M81.75,420.40 C87.49,420.31 106.76,419.83 120.00,419.80 C133.24,419.77 153.50,420.21 170.00,420.20 C186.50,420.19 210.50,419.69 230.00,419.70 C249.50,419.71 280.50,420.29 300.00,420.30 C319.50,420.31 340.50,419.80 360.00,419.80 C379.50,419.80 409.00,420.15 430.00,420.30 C451.00,420.45 483.50,420.71 500.00,420.80 C516.50,420.89 529.50,420.94 540.00,420.90 C550.50,420.85 562.99,420.41 570.00,420.50 C577.01,420.59 584.24,421.35 586.75,421.50" fill="none" stroke="#ff9830" stroke-width="1.2" stroke-linejoin="round" stroke-linecap="round"/>
<path d="M81.75,419.00 C84.49,418.91 92.76,418.37 100.00,418.40 C107.24,418.43 121.00,419.17 130.00,419.20 C139.00,419.23 149.50,418.57 160.00,418.60 C170.50,418.63 188.00,419.40 200.00,419.40 C212.00,419.40 228.00,418.63 240.00,418.60 C252.00,418.57 268.00,419.17 280.00,419.20 C292.00,419.23 308.00,418.77 320.00,418.80 C332.00,418.83 348.00,419.43 360.00,419.40 C372.00,419.37 388.00,418.63 400.00,418.60 C412.00,418.57 428.00,419.21 440.00,419.20 C452.00,419.19 471.00,418.51 480.00,418.50 C489.00,418.49 492.50,418.95 500.00,419.10 C507.50,419.25 521.00,419.55 530.00,419.50 C539.00,419.45 552.80,418.91 560.00,418.80 C567.20,418.69 573.99,418.47 578.00,418.80 C582.01,419.13 585.44,420.67 586.75,421.00 L586.75,422 L81.75,422 Z" fill="#f2495c" fill-opacity="0.1" stroke="none"/>
<path d="M81.75,419.00 C84.49,418.91 92.76,418.37 100.00,418.40 C107.24,418.43 121.00,419.17 130.00,419.20 C139.00,419.23 149.50,418.57 160.00,418.60 C170.50,418.63 188.00,419.40 200.00,419.40 C212.00,419.40 228.00,418.63 240.00,418.60 C252.00,418.57 268.00,419.17 280.00,419.20 C292.00,419.23 308.00,418.77 320.00,418.80 C332.00,418.83 348.00,419.43 360.00,419.40 C372.00,419.37 388.00,418.63 400.00,418.60 C412.00,418.57 428.00,419.21 440.00,419.20 C452.00,419.19 471.00,418.51 480.00,418.50 C489.00,418.49 492.50,418.95 500.00,419.10 C507.50,419.25 521.00,419.55 530.00,419.50 C539.00,419.45 552.80,418.91 560.00,418.80 C567.20,418.69 573.99,418.47 578.00,418.80 C582.01,419.13 585.44,420.67 586.75,421.00" fill="none" stroke="#f2495c" stroke-width="2.3" stroke-linejoin="round" stroke-linecap="round"/>
<g clip-path="url(#lc3)">
<text x="42.5" y="452.70000000000005" style="font-size:10.2px;fill:#6e9fff;stroke:#6e9fff;stroke-width:0.4px;letter-spacing:0.0px;" >Name</text>
<text x="530.6" y="452.70000000000005" text-anchor="end" style="font-size:10.2px;fill:#6e9fff;stroke:#6e9fff;stroke-width:0.4px;letter-spacing:0.3px;" >Last *</text>
<text x="581.9" y="452.70000000000005" text-anchor="end" style="font-size:10.2px;fill:#6e9fff;stroke:#6e9fff;stroke-width:0.4px;letter-spacing:0.3px;" >Max</text>
<rect x="18" y="458.20" width="575" height="0.9" fill="rgba(204,204,220,0.13)"/>
<rect x="24" y="466.20" width="11.8" height="3.6" rx="1.5" fill="#73bf69"/>
<text x="42.5" y="472.3" style="font-size:10.1px;fill:#ccccdc;stroke:#ccccdc;stroke-width:0.3px;letter-spacing:0.1px;" >Mesh Gateway</text>
<text x="530.6" y="472.3" text-anchor="end" style="font-size:10.1px;fill:#ccccdc;stroke:#ccccdc;stroke-width:0.3px;letter-spacing:0.22px;" >24 km/h</text>
<text x="586.6" y="472.3" text-anchor="end" style="font-size:10.1px;fill:#ccccdc;stroke:#ccccdc;stroke-width:0.3px;letter-spacing:0.22px;" >64 km/h</text>
<rect x="18" y="477.05" width="575" height="0.9" fill="rgba(204,204,220,0.13)"/>
<rect x="24" y="485.05" width="11.8" height="3.6" rx="1.5" fill="#fade2a"/>
<text x="42.5" y="491.15000000000003" style="font-size:10.1px;fill:#ccccdc;stroke:#ccccdc;stroke-width:0.3px;letter-spacing:0.1px;" >Mobile Alpha</text>
<text x="530.6" y="491.15000000000003" text-anchor="end" style="font-size:10.1px;fill:#ccccdc;stroke:#ccccdc;stroke-width:0.3px;letter-spacing:0.22px;" >2 km/h</text>
<text x="586.6" y="491.15000000000003" text-anchor="end" style="font-size:10.1px;fill:#ccccdc;stroke:#ccccdc;stroke-width:0.3px;letter-spacing:0.22px;" >6 km/h</text>
<rect x="18" y="495.90" width="575" height="0.9" fill="rgba(204,204,220,0.13)"/>
<rect x="24" y="503.90" width="11.8" height="3.6" rx="1.5" fill="#5794f2"/>
<text x="42.5" y="510.00000000000006" style="font-size:10.1px;fill:#ccccdc;stroke:#ccccdc;stroke-width:0.3px;letter-spacing:0.1px;" >Mobile Beta</text>
<text x="530.6" y="510.00000000000006" text-anchor="end" style="font-size:10.1px;fill:#ccccdc;stroke:#ccccdc;stroke-width:0.3px;letter-spacing:0.22px;" >1 km/h</text>
<text x="586.6" y="510.00000000000006" text-anchor="end" style="font-size:10.1px;fill:#ccccdc;stroke:#ccccdc;stroke-width:0.3px;letter-spacing:0.22px;" >102 km/h</text>
</g>
<g clip-path="url(#mapclip)">
<rect x="607" y="302" width="590" height="214" fill="#f2efe9"/>
<path d="M722.0,302.0 L851.0,302.0 L851.5,312.7 L843.1,321.2 L839.9,333.8 L835.7,348.7 L824.0,357.5 L813.5,370.9 L813.5,371.2 L803.8,362.5 L790.4,351.9 L776.9,342.3 L757.7,334.6 L738.5,326.9 L723.1,312.5 Z" fill="url(#wet)" />
<path d="M746.0,302.0 L819.0,302.0 L819.0,347.0 L806.0,346.5 L778.5,335.4 L757.0,325.0 L746.0,318.0 Z" fill="url(#wetb)" />
<path d="M834.5,304.0 C837.6,304.0 848.4,302.2 851.5,304.0 C854.6,305.8 853.0,310.6 852.0,314.0 C851.0,317.4 848.0,319.0 846.0,323.0 C844.0,327.0 842.6,331.3 841.0,336.0 C839.4,340.7 839.1,346.3 837.0,349.0 C834.9,351.7 830.5,354.4 829.5,351.0 C828.5,347.6 831.1,333.8 831.5,330.0 Z" fill="url(#wetb)" />
<path d="M1022.0,302.0 L1152.9,302.5 L1171.9,312.7 L1167.7,327.5 L1180.4,331.7 L1197.3,333.8 L1197.0,435.0 L1150.0,435.0 L1040.0,400.0 L1035.0,352.0 L1030.0,347.5 L1017.7,348.6 L1012.8,344.0 L1012.8,330.0 L1019.0,313.0 Z" fill="url(#wet)" />
<path d="M979.0,450.0 L987.0,438.0 L1000.0,430.0 L1045.0,412.0 L1100.0,420.0 L1160.0,430.0 L1200.0,425.0 L1200.0,447.0 L1174.0,455.0 L1149.0,450.0 L1126.0,443.0 L1105.0,437.0 L1104.0,432.0 L1059.0,432.0 L1056.5,460.0 L1049.6,469.0 L1045.0,469.0 L1033.5,469.2 L1024.2,465.1 L1015.0,457.7 L998.9,457.7 L987.3,460.5 L981.5,457.7 Z" fill="url(#wet)" />
<path d="M646.2,358.2 L669.5,352.9 L677.9,350.8 L690.6,353.9 L697.0,348.7 L705.4,342.3 L709.6,340.4 L717.3,330.8 L722.1,321.2 L723.1,311.9 L738.5,326.0 L757.7,333.7 L776.9,341.3 L790.4,351.0 L803.8,361.5 L813.5,370.2 L824.0,388.9 L834.6,410.0 L845.0,414.0 L858.0,410.0 L866.0,402.0 L870.0,400.0 L874.6,409.2 L888.5,412.7 L900.0,413.8 L908.8,413.8 L920.4,417.3 L931.9,423.1 L941.2,432.3 L952.7,438.1 L964.2,438.1 L973.5,434.6 L974.6,427.7 L980.4,413.8 L987.3,400.0 L994.4,395.2 L1013.5,376.2 L1026.2,355.0 L1030.4,346.0 L1030.4,336.0 L1033.8,333.4 L1038.4,334.6 L1045.4,332.9 L1054.6,331.1 L1066.2,329.6 L1083.1,328.6 L1093.7,337.0 L1097.9,352.9 L1093.7,363.5 L1081.0,371.9 L1068.3,378.3 L1078.5,383.0 L1090.8,389.2 L1103.0,397.0 L1107.7,403.0 L1118.5,398.5 L1126.0,397.0 L1130.8,400.0 L1140.0,397.0 L1152.3,392.3 L1164.6,393.0 L1167.7,400.0 L1166.0,406.0 L1160.0,409.2 L1158.5,418.5 L1155.4,423.0 L1146.0,426.0 L1152.3,428.5 L1167.7,428.5 L1180.0,426.0 L1198.0,422.0 L1198.0,435.4 L1177.0,438.5 L1161.5,440.0 L1146.0,435.4 L1133.8,431.5 L1121.5,432.3 L1106.0,433.8 L1095.4,428.5 L1083.0,426.0 L1067.7,422.3 L1060.0,420.8 L1045.0,420.0 L1021.9,430.0 L998.9,438.1 L987.3,441.5 L980.4,448.5 L971.2,455.4 L957.3,462.3 L945.8,460.0 L931.9,450.8 L922.7,436.9 L908.8,426.5 L895.0,425.4 L888.5,423.1 L870.0,421.9 L860.8,425.4 L851.5,434.6 L846.9,443.8 L837.7,453.1 L828.5,464.6 L819.2,471.5 L807.7,476.2 L796.2,480.8 L784.6,485.4 L775.4,476.2 L761.5,469.2 L756.9,476.2 L759.2,492.3 L766.2,501.5 L767.3,520.0 L663.7,516.0 L655.0,490.0 L645.0,460.0 L640.6,446.0 L643.0,430.0 L647.5,414.0 L652.0,400.0 L651.5,384.6 L650.4,363.5 Z" fill="#aad3df" />
<path d="M1008.0,301.0 L1045.0,301.0 L1038.5,311.0 L1036.0,310.4 L1022.3,308.0 L1022.3,313.8 L1024.6,327.7 L1013.0,330.0 L1008.0,331.0 Z" fill="#f2efe9" />
<path d="M1033.0,302.0 L1043.5,302.0 L1038.0,309.5 Z" fill="#bfe0a8" />
<path d="M1044.6,302.5 C1043.5,304.1 1040.3,308.4 1038.4,311.5 C1036.5,314.6 1035.1,316.9 1033.8,319.6 C1032.5,322.3 1031.6,323.4 1031.0,326.5 C1030.4,329.6 1030.5,335.1 1030.4,337.0" fill="none" stroke="#aad3df" stroke-width="2.6" stroke-linecap="round" stroke-linejoin="round"/>
<path d="M1022.3,308.0 C1022.2,310.2 1021.1,316.5 1021.5,320.0 C1021.9,323.5 1026.1,325.9 1024.6,327.7 C1023.1,329.5 1015.1,327.1 1013.0,330.0 C1010.9,332.9 1012.2,340.5 1013.0,343.8 C1013.8,347.1 1014.8,347.9 1017.7,348.4 C1020.6,348.9 1027.0,346.8 1029.0,346.5" fill="none" stroke="#b5d9e3" stroke-width="1.2" stroke-linecap="round" stroke-linejoin="round" stroke-opacity="0.9"/>
<path d="M942.6,377.9 C943.4,377.5 945.3,375.9 946.8,376.2 C948.4,376.4 950.7,378.0 951.1,379.3 C951.4,380.7 950.2,382.9 948.9,383.6 C947.7,384.2 945.0,383.0 944.1,382.9 Z" fill="#aad3df" />
<path d="M614.5,388.9 C616.0,388.3 620.1,385.3 622.9,385.7 C625.8,386.1 629.6,388.5 630.3,391.0 C631.1,393.4 629.2,397.5 627.2,399.4 C625.1,401.3 621.2,402.1 618.7,401.5 C616.2,401.0 614.4,397.2 613.4,396.3 Z" fill="#b5d6dd" />
<path d="M1050.3,380.0 C1051.6,380.2 1054.5,380.6 1057.7,381.4 C1060.9,382.3 1064.1,383.3 1068.3,384.6 C1072.5,386.0 1077.9,386.9 1081.0,388.9 C1084.0,390.8 1085.2,392.9 1085.2,395.2 C1085.2,397.5 1083.6,400.0 1081.0,401.5 C1078.3,403.1 1073.4,404.0 1070.4,403.7 C1067.3,403.3 1065.6,401.7 1064.0,399.4 C1062.5,397.1 1063.8,393.1 1061.9,391.0 C1060.0,388.9 1055.0,388.4 1053.5,387.8 Z" fill="url(#isl)" />
<path d="M1093.0,396.0 C1093.7,395.4 1095.6,392.8 1097.0,392.6 C1098.4,392.4 1099.9,393.6 1101.0,395.0 C1102.1,396.4 1103.5,399.5 1103.0,400.5 C1102.5,401.5 1098.9,400.7 1098.0,400.8 Z" fill="url(#isl)" />
<path d="M1045.0,404.5 C1046.3,404.1 1049.3,402.6 1052.0,402.5 C1054.7,402.4 1057.5,403.2 1060.0,404.0 C1062.5,404.8 1065.6,405.9 1066.0,407.0 C1066.4,408.1 1064.9,409.4 1062.0,410.0 C1059.1,410.6 1053.1,410.6 1050.0,410.5 C1046.9,410.4 1045.9,409.7 1045.0,409.5 Z" fill="url(#isl)" />
<path d="M1105.5,403.5 C1106.0,403.4 1107.7,402.5 1108.5,403.0 C1109.3,403.5 1110.4,405.8 1110.0,406.5 C1109.6,407.2 1107.1,406.9 1106.5,407.0 Z" fill="url(#isl)" />
<path d="M723.1,312.5 C725.8,315.1 732.2,322.9 738.5,326.9 C744.7,330.9 750.8,331.8 757.7,334.6 C764.6,337.4 771.0,339.2 776.9,342.3 C782.8,345.4 785.5,348.3 790.4,351.9 C795.2,355.6 799.7,359.0 803.8,362.5 C808.0,366.0 809.8,366.4 813.5,371.2 C817.1,375.9 820.2,381.9 824.0,388.9 C827.9,395.8 832.7,406.2 834.6,410.0" fill="none" stroke="#aebcc4" stroke-width="2.6" stroke-linecap="round" stroke-linejoin="round" stroke-opacity="0.9"/>
<path d="M824.0,358.2 C825.9,357.4 831.2,353.4 834.6,353.9 C838.0,354.5 840.0,357.7 843.1,361.3 C846.1,365.0 848.5,368.3 851.5,374.0 C854.6,379.8 857.5,386.6 860.0,393.1 C862.5,399.6 869.5,407.0 865.3,410.0 C861.1,413.1 843.4,413.1 836.7,410.0 C830.1,407.0 831.5,399.9 828.3,393.1 C825.0,386.2 820.5,375.7 818.8,371.9 Z" fill="#f2efe9" />
<path d="M813.5,370.9 C815.0,370.7 818.9,366.6 821.9,369.8 C825.0,373.0 827.3,381.6 830.4,388.9 C833.4,396.1 838.3,406.2 838.9,410.0 C839.4,413.8 836.2,413.8 833.6,410.0 C830.9,406.2 825.8,392.7 824.0,388.9 Z" fill="#d3ebbd" />
<path d="M827.2,358.2 C828.5,357.9 831.8,354.6 834.6,356.7 C837.5,358.8 840.0,364.8 843.1,369.8 C846.1,374.8 850.4,381.2 851.5,384.6 C852.7,388.0 851.7,390.8 849.4,388.9 C847.1,386.9 842.3,378.6 838.9,374.0 C835.4,369.5 831.9,365.4 830.4,363.5 Z" fill="#d3d2d0" />
<path d="M829.6,398.8 C835.2,398.8 854.8,397.4 860.8,398.8 C866.8,400.3 864.7,404.6 863.1,406.9 C861.4,409.3 856.1,411.2 851.5,412.0 C847.0,412.8 841.4,412.5 837.7,411.5 C834.0,410.6 832.0,407.8 830.8,406.9 Z" fill="#d9ebc9" />
<path d="M830.8,401.2 C832.9,400.9 839.8,398.5 842.3,400.0 C844.8,401.5 845.9,407.6 844.6,409.2 C843.4,410.9 837.1,409.2 835.4,409.2 Z" fill="#b9cfd6" />
<path d="M846.9,402.3 C849.0,402.1 856.4,399.9 858.5,401.2 C860.5,402.4 860.1,407.7 858.5,409.2 C856.8,410.8 850.9,409.6 849.2,409.7 Z" fill="url(#wet)" />
<path d="M922.5,302.5 C932.8,302.5 968.2,299.9 979.6,302.5 C991.0,305.1 984.4,310.9 986.0,316.9 C987.5,322.9 987.1,329.1 988.1,336.0 C989.0,342.8 990.5,348.9 991.3,355.0 C992.0,361.1 992.9,364.9 992.3,369.8 C991.7,374.8 990.4,379.8 988.1,382.5 C985.8,385.2 983.8,385.8 979.6,384.6 C975.4,383.5 968.6,376.9 964.8,376.2 C961.0,375.4 962.7,380.8 958.5,380.4 C954.3,380.0 945.3,377.1 941.5,374.0 C937.7,371.0 938.5,368.0 937.3,363.5 C936.2,358.9 937.9,354.0 935.2,348.7 C932.5,343.3 924.8,336.5 922.5,333.8 Z" fill="#cde6b3" />
<path d="M975.4,329.6 C977.3,330.0 983.7,328.7 986.0,331.7 C988.3,334.8 989.2,344.3 988.1,346.5 C986.9,348.8 981.1,344.8 979.6,344.4 Z" fill="#b7d3a3" />
<path d="M966.9,363.5 C969.2,363.1 977.0,360.2 979.6,361.3 C982.3,362.5 983.3,367.5 981.7,369.8 C980.2,372.1 973.1,373.3 971.2,374.0 Z" fill="#c3d3a3" />
<path d="M933.1,378.3 C935.0,377.3 939.1,372.6 943.7,373.0 C948.2,373.4 956.6,377.5 958.5,380.4 C960.4,383.2 958.0,387.5 954.2,388.9 C950.4,390.2 940.4,388.0 937.3,387.8 Z" fill="#c5d8ad" />
<path d="M942.6,377.9 C943.4,377.5 945.3,375.9 946.8,376.2 C948.4,376.4 950.7,378.0 951.1,379.3 C951.4,380.7 950.2,382.9 948.9,383.6 C947.7,384.2 945.0,383.0 944.1,382.9 Z" fill="#aad3df" />
<path d="M994.4,370.9 C996.0,371.4 1001.7,371.9 1002.9,374.0 C1004.0,376.1 1002.3,378.7 1000.8,382.5 C999.3,386.3 997.1,390.2 994.4,395.2 C991.8,400.1 988.6,407.3 986.0,410.0 C983.3,412.7 978.9,413.1 979.6,410.0 C980.4,407.0 988.3,396.1 990.2,393.1 Z" fill="#d5ebc0" />
<path d="M975.8,400.0 C978.3,400.0 988.8,397.1 989.6,400.0 C990.5,402.9 983.3,411.6 980.4,416.2 C977.5,420.7 974.7,423.7 973.5,425.4 Z" fill="url(#wet)" />
<path d="M855.8,302.5 L900.0,302.5 L907.7,302.5 L909.8,312.7 L899.2,331.7 L907.7,352.9 L903.5,369.8 L899.2,388.9 L895.0,410.0 L869.5,410.0 L864.2,395.2 L849.4,369.8 L844.1,352.9 L851.5,342.3 L856.8,327.5 Z" fill="#e6e4e0" />
<path d="M886.2,334.6 C889.3,334.4 899.7,331.9 903.5,333.7 C907.3,335.4 908.3,341.3 907.3,344.2 C906.3,347.2 901.2,349.7 897.7,350.0 C894.2,350.3 889.8,346.8 888.1,346.2 Z" fill="#d3d2d0" />
<path d="M861.2,346.2 L878.5,345.2 L879.4,376.9 L863.1,376.9 Z" fill="#dcdad7" />
<path d="M883.3,355.8 L901.5,355.8 L903.5,373.1 L883.3,374.0 Z" fill="#dddbd8" />
<path d="M865.0,325.0 L878.5,328.8 L878.5,343.3 L863.1,343.3 Z" fill="#dedcd9" />
<path d="M893.8,305.8 C897.3,306.1 908.9,304.6 913.1,307.7 C917.2,310.8 919.7,320.0 916.9,323.1 C914.2,326.2 901.2,324.7 897.7,325.0 Z" fill="#e0deda" />
<path d="M843.8,365.4 C845.9,365.0 852.8,361.4 855.4,363.5 C858.0,365.5 855.8,372.1 858.3,376.9 C860.7,381.8 868.0,386.9 868.8,390.4 C869.7,393.8 866.2,397.5 863.1,396.2 C860.0,394.8 853.6,385.1 851.5,382.7 Z" fill="#dcdad6" />
<path d="M918.3,349.7 C919.8,349.3 924.6,345.5 926.7,347.6 C928.8,349.7 931.0,358.5 929.9,361.3 C928.8,364.2 922.1,363.1 920.4,363.5 Z" fill="#cfcfcd" />
<path d="M905.6,362.4 C907.1,362.0 911.0,358.6 914.0,360.3 C917.1,362.0 921.7,368.1 922.5,371.9 C923.3,375.7 920.9,380.3 918.3,381.4 C915.6,382.6 909.6,378.8 907.7,378.3 Z" fill="#d0d0ce" />
<path d="M958.5,392.0 C960.7,391.6 967.4,388.6 971.2,389.9 C975.0,391.2 978.9,395.6 979.6,399.4 C980.4,403.2 979.6,409.0 975.4,411.1 C971.2,413.2 959.8,411.1 956.3,411.1 Z" fill="#d4d3d1" />
<path d="M920.4,382.5 C923.4,382.9 933.1,382.7 937.3,384.6 C941.5,386.5 945.2,391.6 943.7,393.1 C942.1,394.6 931.5,393.1 928.8,393.1 Z" fill="#d6d5d3" />
<path d="M899.2,312.7 C903.0,311.9 916.4,304.7 920.4,308.5 C924.4,312.3 922.4,327.8 921.4,333.8 C920.5,339.9 917.6,342.3 915.1,342.3 C912.6,342.3 909.0,335.4 907.7,333.8 Z" fill="#e6ecd8" />
<path d="M916.2,388.9 C919.2,389.6 929.3,390.8 933.1,393.1 C936.9,395.4 939.6,400.0 937.3,401.5 C935.0,403.1 923.4,401.5 920.4,401.5 Z" fill="#d5e8c0" />
<path d="M908.8,398.8 L971.2,398.8 L970.0,423.1 L973.5,434.6 L964.2,438.1 L952.7,438.1 L941.2,432.3 L931.9,423.1 L920.4,417.3 L908.8,413.8 Z" fill="#ecebe8" />
<path d="M922.7,411.5 C927.7,412.0 942.9,410.9 950.4,413.8 C957.9,416.8 963.8,424.0 964.2,427.7 C964.7,431.4 957.3,434.6 952.7,434.6 C948.1,434.6 941.3,428.9 938.8,427.7 Z" fill="#dedddb" />
<path d="M893.8,425.8 L908.8,427.2 L922.7,438.1 L931.9,451.9 L945.8,461.2 L959.6,463.5 L963.1,476.2 L959.6,492.3 L964.2,515.4 L893.8,515.4 Z" fill="#d9e8c6" />
<path d="M899.6,434.6 C902.5,435.4 911.2,435.5 915.8,439.2 C920.3,443.0 925.0,450.0 925.0,455.4 C925.0,460.8 920.3,467.6 915.8,469.2 C911.2,470.9 902.5,465.5 899.6,464.6 Z" fill="#c6dfb0" />
<path d="M927.3,460.0 C931.0,461.3 942.7,462.8 948.1,466.9 C953.5,471.1 958.6,478.5 957.3,483.1 C956.1,487.7 946.1,493.1 941.2,492.3 C936.2,491.5 931.7,481.0 929.6,478.5 Z" fill="#c9e0b2" />
<path d="M895.0,483.1 C899.2,482.7 910.6,478.3 918.1,480.8 C925.6,483.3 935.7,490.7 936.5,496.9 C937.4,503.2 930.2,512.1 922.7,515.4 C915.2,518.7 900.0,515.4 895.0,515.4 Z" fill="#c6dfb0" />
<path d="M908.8,492.3 C913.0,491.5 924.9,485.6 931.9,487.7 C939.0,489.8 948.5,499.7 948.1,503.9 C947.7,508.0 932.9,509.5 929.6,510.8 Z" fill="#efe8da" />
<path d="M853.9,446.2 C856.8,444.1 865.4,436.3 870.0,434.6 C874.6,433.0 873.6,434.8 879.2,436.9 C884.8,439.0 897.2,431.8 901.2,446.2 C905.1,460.5 912.6,503.9 901.2,516.5 C889.7,529.2 848.3,520.9 837.7,516.5 C827.1,512.2 838.6,499.6 842.3,492.3 C846.1,485.0 856.4,482.0 858.5,476.2 C860.5,470.3 854.7,462.9 853.9,460.0 Z" fill="#d6e7c2" />
<path d="M879.2,441.5 C883.2,442.0 897.2,437.6 901.2,443.8 C905.1,450.1 903.5,471.6 901.2,476.2 C898.9,480.7 892.4,473.0 888.5,469.2 C884.5,465.5 880.9,457.9 879.2,455.4 Z" fill="#c4ddae" />
<path d="M846.9,487.7 C851.1,486.5 862.5,479.1 870.0,480.8 C877.5,482.4 886.8,490.5 888.5,496.9 C890.1,503.4 887.5,513.0 879.2,516.5 C870.9,520.1 849.0,516.5 842.3,516.5 Z" fill="#c9e0b3" />
<path d="M879.2,441.5 C880.9,441.1 886.4,434.2 888.5,439.2 C890.5,444.2 892.0,464.3 890.8,469.2 C889.5,474.2 883.2,467.3 881.5,466.9 Z" fill="#f0ece0" />
<path d="M887.9,433.3 C889.4,433.6 894.1,432.6 896.2,435.0 C898.3,437.4 899.8,444.2 899.5,446.6 C899.2,448.9 896.4,449.1 894.6,448.2 C892.8,447.3 890.5,442.8 889.6,441.6 Z" fill="#a9cf98" />
<path d="M936.0,458.1 C938.3,458.4 945.3,457.1 949.2,459.8 C953.1,462.5 956.3,468.6 957.5,473.0 C958.7,477.5 958.2,483.4 955.8,484.6 C953.4,485.8 947.5,482.4 944.2,479.7 C941.0,477.0 938.8,471.5 937.6,469.7 Z" fill="#bcdaa6" />
<path d="M879.7,484.6 C883.2,484.3 893.6,480.9 899.5,483.0 C905.5,485.1 911.3,491.8 912.8,496.2 C914.3,500.7 912.0,506.3 907.8,507.8 C903.6,509.3 892.9,505.1 889.6,504.5 Z" fill="#b9d9a3" />
<path d="M856.5,499.5 C860.7,498.9 871.9,494.7 879.7,496.2 C887.4,497.7 897.2,504.1 899.5,507.8 C901.9,511.5 900.7,515.3 892.9,516.9 C885.2,518.6 863.0,516.9 856.5,516.9 Z" fill="#bfe0a6" />
<path d="M912.8,492.9 C917.0,492.6 930.0,490.1 936.0,491.3 C941.9,492.5 945.9,496.6 945.9,499.5 C945.9,502.5 941.3,506.6 936.0,507.8 C930.6,509.0 919.7,506.5 916.1,506.2 Z" fill="#ece4d2" />
<path d="M830.0,468.1 C834.5,467.9 845.9,466.7 854.8,467.3 C863.8,467.8 875.2,466.2 879.7,471.4 C884.1,476.6 883.8,491.2 879.7,496.2 C875.5,501.3 861.9,495.8 856.5,499.5 C851.1,503.3 854.6,513.8 849.9,516.9 C845.1,520.0 833.6,516.9 830.0,516.9 Z" fill="#d9d8d5" fill-opacity="0.85" />
<path d="M851.5,449.9 C853.6,449.3 859.2,444.2 863.1,446.6 C867.0,448.9 873.0,459.7 873.0,463.1 C873.0,466.5 866.7,466.2 863.1,465.6 C859.5,465.0 855.0,460.8 853.2,459.8 Z" fill="#dad9d6" fill-opacity="0.8" />
<path d="M768.5,488.2 L784.6,485.9 L796.2,481.2 L807.7,476.6 L819.2,472.0 L828.5,465.1 L837.7,453.5 L846.9,444.3 L851.5,435.1 L860.8,425.8 L870.0,422.4 L888.5,423.5 L895.4,423.1 L896.5,440.4 L879.2,439.2 L870.0,436.9 L858.5,460.0 L853.9,476.2 L842.3,492.3 L837.7,516.5 L763.8,516.5 L767.3,501.5 Z" fill="#dddcda" />
<path d="M819.2,476.2 C823.4,475.7 837.3,470.1 842.3,473.9 C847.3,477.6 849.8,492.4 846.9,496.9 C844.0,501.5 829.9,498.8 826.2,499.2 Z" fill="#e9e6df" />
<path d="M756.9,474.3 C758.2,473.6 760.5,469.8 763.8,470.4 C767.2,470.9 772.5,474.5 775.4,477.3 C778.3,480.1 781.2,483.8 780.0,485.9 C778.8,487.9 771.0,485.8 768.5,488.6 C766.0,491.4 767.8,500.9 766.2,501.5 C764.5,502.2 760.5,494.0 759.2,492.3 Z" fill="#c8e0b0" />
<path d="M959.6,462.8 L971.2,455.9 L982.7,457.7 L998.9,458.9 L1015.0,458.9 L1024.2,465.8 L1033.5,469.2 L1046.2,469.2 L1046.2,515.4 L964.2,515.4 L959.6,492.3 L963.1,476.2 Z" fill="#dddcda" />
<path d="M1003.5,453.1 C1006.0,453.3 1014.4,452.6 1017.3,454.2 C1020.2,455.9 1021.3,460.4 1019.6,462.3 C1018.0,464.2 1010.2,464.2 1008.1,464.6 Z" fill="#bfc3a0" />
<path d="M996.5,457.7 C999.0,459.8 1005.4,467.6 1010.4,469.2 C1015.4,470.9 1017.8,470.3 1024.2,466.9 C1030.7,463.6 1042.2,446.2 1046.2,450.8 C1050.1,455.3 1050.1,485.7 1046.2,492.3 C1042.2,499.0 1030.7,490.6 1024.2,487.7 C1017.8,484.8 1012.9,478.2 1010.4,476.2 Z" fill="#d7eac3" />
<path d="M1031.2,492.3 C1033.9,491.7 1043.5,485.9 1046.2,488.9 C1048.9,491.8 1048.5,504.9 1046.2,508.5 C1043.9,512.0 1035.8,508.5 1033.5,508.5 Z" fill="#e4dde8" />
<path d="M1045.0,469.2 L1056.5,458.8 L1058.8,432.3 L1103.8,432.3 L1105.4,447.3 L1114.2,453.1 L1105.0,465.7 L1088.8,472.0 L1072.7,476.1 L1045.0,483.0 Z" fill="#dcebc8" />
<path d="M1058.8,432.3 L1103.8,432.3 L1104.5,446.1 L1091.1,449.6 L1088.8,460.0 L1072.7,466.9 L1058.8,457.7 Z" fill="url(#mil)" />
<path d="M1098.1,448.4 L1121.1,446.1 L1148.8,449.6 L1174.2,454.9 L1204.2,447.3 L1204.2,476.1 L1174.2,476.1 L1137.3,473.8 L1114.2,469.2 L1102.7,464.6 Z" fill="#d5d4d2" />
<path d="M1176.0,441.0 C1180.0,440.1 1194.0,432.9 1198.0,436.0 C1202.0,439.1 1203.0,454.0 1198.0,458.0 C1193.0,462.0 1174.9,459.6 1170.0,458.0 C1165.1,456.4 1170.8,450.6 1171.0,449.0 Z" fill="#d8d7d5" />
<path d="M1043.8,469.2 L1072.7,469.2 L1088.8,471.5 L1098.1,492.3 L1114.2,515.3 L1043.8,515.3 Z" fill="#e3e1dd" />
<path d="M1045.0,492.3 C1047.5,491.4 1054.7,486.0 1058.8,487.7 C1063.0,489.3 1068.1,496.5 1068.1,501.5 C1068.1,506.5 1063.0,512.8 1058.8,515.3 C1054.7,517.8 1047.5,515.3 1045.0,515.3 Z" fill="#d3d2d0" />
<path d="M1088.8,471.5 L1102.7,466.9 L1137.3,469.2 L1169.6,469.2 L1174.2,492.3 L1204.2,491.1 L1204.2,515.3 L1114.2,515.3 L1098.1,492.3 Z" fill="#c9ebb2" />
<path d="M1102.7,466.9 C1111.4,467.1 1142.6,466.2 1151.1,468.1 C1159.6,469.9 1152.9,475.3 1150.0,477.3 C1147.1,479.2 1140.2,477.9 1135.0,478.9 C1129.8,479.8 1126.1,482.9 1121.1,482.6 C1116.1,482.3 1109.8,478.2 1107.3,477.3 Z" fill="#d5d4d2" />
<path d="M1136.1,484.2 C1137.6,483.8 1142.1,480.0 1144.2,481.9 C1146.3,483.8 1147.7,490.6 1147.7,494.6 C1147.7,498.5 1146.1,502.4 1144.2,503.8 C1142.3,505.3 1138.5,502.9 1137.3,502.7 Z" fill="#aaa88a" />
<path d="M1155.7,476.1 C1157.8,475.9 1165.0,472.5 1167.3,475.0 C1169.5,477.5 1170.3,487.1 1168.4,490.0 C1166.5,492.9 1159.0,490.9 1156.9,491.1 Z" fill="#ece8df" />
<path d="M1170.7,469.2 L1204.2,469.2 L1204.2,490.4 L1192.6,491.1 L1174.2,492.3 L1170.7,480.7 Z" fill="#d3d2d0" />
<path d="M606.0,363.5 C607.5,363.1 612.2,360.2 614.5,361.3 C616.7,362.5 619.5,366.4 618.7,369.8 C617.9,373.2 612.5,377.7 610.2,380.4 C607.9,383.1 606.8,383.9 606.0,384.6 Z" fill="#e0ecd0" />
<path d="M607.1,319.0 C608.6,319.8 613.6,319.1 615.5,323.3 C617.4,327.5 618.2,337.6 617.6,342.3 C617.1,347.1 614.3,349.0 612.3,349.7 C610.4,350.5 608.0,347.1 607.1,346.5 Z" fill="#d3e8c6" />
<path d="M618.7,345.5 C621.0,345.1 628.0,342.4 631.4,343.4 C634.8,344.3 638.1,349.1 637.7,350.8 C637.4,352.5 630.8,352.5 629.3,352.9 Z" fill="#d6e9cc" />
<path d="M608.1,327.5 C609.3,329.4 611.2,334.8 614.5,338.1 C617.7,341.3 621.9,343.4 626.1,345.5 C630.3,347.6 634.3,347.6 637.7,349.7 C641.2,351.8 643.8,355.8 645.1,357.1" fill="none" stroke="#a9cfe0" stroke-width="1.0" stroke-linecap="round" stroke-linejoin="round" stroke-opacity="0.8"/>
<path d="M629.3,367.7 C630.8,367.5 636.2,365.5 637.7,366.6 C639.3,367.8 638.9,372.1 637.7,374.0 C636.6,375.9 632.5,376.6 631.4,377.2 Z" fill="#c9e2b3" />
<path d="M681.1,319.0 C682.2,318.8 686.2,316.1 687.4,318.0 C688.7,319.9 689.0,327.1 688.1,329.6 C687.1,332.1 683.2,331.4 682.2,331.7 Z" fill="#d4e8c4" />
<path d="M679.0,345.5 C680.7,344.2 685.6,338.8 688.5,338.1 C691.4,337.3 693.3,339.2 694.9,341.3 C696.4,343.3 697.9,347.2 697.0,349.7 C696.0,352.2 692.6,354.8 689.6,355.0 C686.5,355.2 681.8,351.5 680.0,350.8 Z" fill="url(#wet)" />
<path d="M689.6,321.2 C690.9,320.4 694.9,316.2 697.0,316.9 C699.1,317.7 702.0,322.1 701.2,325.4 C700.4,328.6 694.8,333.8 692.7,334.9 C690.6,336.0 690.1,332.3 689.6,331.7 Z" fill="#d8ead0" />
<path d="M606.0,404.6 C607.7,404.2 612.7,400.6 615.2,402.3 C617.7,404.0 620.3,409.3 619.8,413.8 C619.4,418.4 615.4,424.4 612.9,427.7 C610.4,431.0 607.2,431.5 606.0,432.3 Z" fill="#dddcda" />
<path d="M619.8,413.8 C623.6,413.0 635.8,408.8 640.6,409.2 C645.4,409.6 646.4,411.6 646.4,416.2 C646.4,420.7 644.1,430.9 640.6,434.6 C637.1,438.4 629.3,436.5 626.8,436.9 Z" fill="#c9dde0" />
<path d="M640.6,430.0 C641.2,429.6 643.2,424.8 644.1,427.7 C644.9,430.6 645.9,441.6 645.2,446.2 C644.6,450.7 641.4,451.8 640.6,453.1 Z" fill="#d2e8b8" />
<path d="M606.0,453.1 L615.2,455.4 L615.2,510.8 L606.0,515.4 Z" fill="#e6e4df" />
<path d="M833.6,345.5 L835.7,352.9" fill="none" stroke="#aad3df" stroke-width="4.0" stroke-linecap="round" stroke-linejoin="round"/>
<path d="M835.7,352.9 C837.0,354.4 840.2,357.9 843.1,361.3 C845.9,364.8 848.5,367.0 851.5,371.9 C854.6,376.9 857.4,383.9 860.0,388.9 C862.6,393.8 864.0,395.4 865.9,399.4 C867.8,403.4 869.7,409.0 870.6,411.1" fill="none" stroke="#aad3df" stroke-width="4.4" stroke-linecap="round" stroke-linejoin="round"/>
<path d="M862.1,393.1 C863.1,394.6 865.7,398.3 867.4,401.5 C869.1,404.8 870.3,410.3 871.6,411.1 C872.9,411.8 874.1,406.7 874.6,405.8" fill="none" stroke="#aad3df" stroke-width="8" stroke-linecap="round" stroke-linejoin="round"/>
<path d="M647.0,358.5 C649.3,358.0 655.9,356.5 660.0,355.5 C664.1,354.5 666.8,353.8 670.0,353.0 C673.2,352.2 676.6,351.5 678.0,351.2" fill="none" stroke="#cde8bd" stroke-width="2.2" stroke-linecap="round" stroke-linejoin="round"/>
<path d="M648.5,360.0 C649.0,362.2 650.4,366.6 651.0,372.0 C651.6,377.4 651.8,383.2 651.8,390.0 C651.8,396.8 651.9,405.0 651.0,410.0 C650.1,415.0 648.4,414.0 647.0,418.0 C645.6,422.0 644.5,427.0 643.5,432.0 C642.5,437.0 641.9,443.5 641.5,446.0" fill="none" stroke="#cde8bd" stroke-width="2.4" stroke-linecap="round" stroke-linejoin="round"/>
<path d="M690.6,333.8 C691.8,332.3 695.3,328.1 697.0,325.4 C698.7,322.7 699.6,320.2 700.1,319.0" fill="none" stroke="#c9e6b8" stroke-width="3" stroke-linecap="round" stroke-linejoin="round"/>
<path d="M646.2,361.8 L654.7,363.0 L685.3,368.1 L757.3,368.1 L813.5,368.3" fill="none" stroke="#8fc4a3" stroke-width="1.9" stroke-linecap="round" stroke-linejoin="round" stroke-opacity="0.95"/>
<path d="M654.7,363.0 L653.0,384.6 L651.5,411.1" fill="none" stroke="#8fc4a3" stroke-width="1.7" stroke-linecap="round" stroke-linejoin="round" stroke-opacity="0.95"/>
<path d="M685.3,368.1 L707.5,411.1" fill="none" stroke="#8fc4a3" stroke-width="1.7" stroke-linecap="round" stroke-linejoin="round" stroke-opacity="0.95"/>
<path d="M705.7,400.0 L707.5,406.9 L692.5,454.2" fill="none" stroke="#8fc4a3" stroke-width="1.7" stroke-linecap="round" stroke-linejoin="round" stroke-opacity="0.95"/>
<path d="M651.0,453.5 L652.2,449.6 L675.2,448.9 L676.4,453.5" fill="none" stroke="#8fc4a3" stroke-width="1.7" stroke-linecap="round" stroke-linejoin="round" stroke-opacity="0.95"/>
<path d="M743.3,508.5 L747.2,471.5 L757.2,466.9" fill="none" stroke="#8fc4a3" stroke-width="1.7" stroke-linecap="round" stroke-linejoin="round" stroke-opacity="0.95"/>
<path d="M750.0,469.2 C752.1,469.0 757.0,466.8 761.5,468.1 C766.1,469.4 771.2,473.4 775.4,476.6 C779.5,479.8 783.0,484.2 784.6,485.9" fill="none" stroke="#8fc4a3" stroke-width="1.6" stroke-linecap="round" stroke-linejoin="round" stroke-opacity="0.95"/>
<path d="M750.0,508.5 C751.7,508.5 756.1,509.7 759.2,508.5 C762.3,507.2 765.9,502.8 767.3,501.5" fill="none" stroke="#8fc4a3" stroke-width="1.6" stroke-linecap="round" stroke-linejoin="round" stroke-opacity="0.95"/>
<path d="M646.2,360.3 L757.3,404.1" fill="none" stroke="#a58cb5" stroke-width="0.8" stroke-linecap="round" stroke-linejoin="round" stroke-dasharray="5 2 1 2" stroke-opacity="0.8"/>
<path d="M723.1,312.5 L766.3,400.0 L769.6,408.1" fill="none" stroke="#a58cb5" stroke-width="0.8" stroke-linecap="round" stroke-linejoin="round" stroke-dasharray="5 2 1 2" stroke-opacity="0.8"/>
<path d="M750.0,400.0 C753.5,401.5 759.2,405.6 769.6,408.1 C780.0,410.6 793.4,411.8 807.7,413.8 C822.0,415.9 838.4,419.4 849.2,419.6 C860.0,419.8 858.4,415.2 867.7,415.0 C877.0,414.8 893.8,417.6 901.2,418.5 C908.6,419.3 905.0,417.5 908.8,419.6 C912.7,421.7 918.1,425.4 922.7,430.0 C927.3,434.6 929.7,441.1 934.2,445.0 C938.8,448.9 942.7,451.1 948.1,451.9 C953.5,452.8 957.2,452.3 964.2,449.6 C971.3,446.9 979.0,441.3 987.3,436.9 C995.6,432.6 1000.0,429.5 1010.4,425.4 C1020.8,421.2 1034.6,415.5 1045.0,413.8 C1055.4,412.2 1057.7,414.7 1068.1,416.1 C1078.4,417.6 1090.2,419.8 1102.7,421.9 C1115.1,424.0 1126.9,425.4 1137.3,427.7 C1147.7,430.0 1148.3,433.8 1160.3,434.6 C1172.4,435.4 1196.3,432.7 1204.2,432.3" fill="none" stroke="#a58cb5" stroke-width="0.8" stroke-linecap="round" stroke-linejoin="round" stroke-dasharray="5 2 1 2" stroke-opacity="0.75"/>
<path d="M769.6,408.1 L750.0,436.9 L757.2,423.1 L735.2,457.7" fill="none" stroke="#a58cb5" stroke-width="0.8" stroke-linecap="round" stroke-linejoin="round" stroke-dasharray="5 2 1 2" stroke-opacity="0.8"/>
<path d="M735.2,469.2 C739.2,466.3 750.4,458.5 757.2,453.1 C764.0,447.7 766.1,443.8 773.1,439.2 C780.1,434.7 787.8,430.8 796.2,427.7 C804.5,424.6 810.9,423.6 819.2,421.9 C827.5,420.3 834.0,421.2 842.3,418.5 C850.6,415.8 860.2,410.5 865.4,406.9 C870.6,403.4 872.1,400.2 871.2,398.8 C870.2,397.5 863.5,402.8 860.0,399.4 C856.5,396.1 854.6,385.7 851.5,380.4 C848.5,375.1 844.6,371.7 843.1,369.8" fill="none" stroke="#6f9fe8" stroke-width="1.0" stroke-linecap="round" stroke-linejoin="round" stroke-dasharray="3 2.2"/>
<path d="M1108.5,310.6 C1106.2,313.6 1096.9,321.8 1095.8,327.5 C1094.6,333.2 1100.6,336.6 1102.1,342.3 C1103.6,348.0 1101.6,355.4 1104.2,359.2 C1106.9,363.0 1113.1,360.4 1116.9,363.5 C1120.7,366.5 1121.6,373.1 1125.4,376.2 C1129.2,379.2 1135.4,378.5 1138.1,380.4 C1140.7,382.3 1137.2,386.7 1140.2,386.7 C1143.2,386.7 1150.1,380.0 1155.0,380.4 C1160.0,380.8 1162.0,388.1 1167.7,388.9 C1173.4,389.6 1184.5,386.5 1186.7,384.6 C1189.0,382.7 1180.8,382.1 1180.4,378.3 C1180.0,374.5 1183.9,369.2 1184.6,363.5 C1185.4,357.8 1186.1,350.0 1184.6,346.5 C1183.1,343.1 1179.2,343.7 1176.2,344.4 C1173.1,345.2 1170.6,350.4 1167.7,350.8 C1164.8,351.2 1161.6,349.2 1160.3,346.5 C1159.0,343.9 1163.2,337.1 1160.3,336.0 C1157.4,334.8 1150.0,341.7 1144.4,340.2 C1138.9,338.7 1134.6,331.7 1129.6,327.5 C1124.7,323.3 1119.2,318.8 1116.9,316.9 Z" fill="#a9d59a" fill-opacity="0.12" stroke="#7fbf7a" stroke-width="1.6" stroke-opacity="0.8"/>
<path d="M779.6,304.2 C780.4,305.8 781.6,308.5 783.8,312.7 C786.1,316.9 788.9,324.1 792.3,327.5 C795.7,330.9 799.1,329.1 802.9,331.7 C806.7,334.4 809.7,339.1 813.5,342.3 C817.3,345.5 822.1,348.4 824.0,349.7" fill="none" stroke="#86c08a" stroke-width="1.2" stroke-linecap="round" stroke-linejoin="round" stroke-opacity="0.7"/>
<path d="M819.8,312.7 C820.6,314.6 822.1,319.8 824.0,323.3 C825.9,326.7 829.6,327.0 830.4,331.7 C831.2,336.5 828.7,346.5 828.3,349.7" fill="none" stroke="#86c08a" stroke-width="1.2" stroke-linecap="round" stroke-linejoin="round" stroke-opacity="0.7"/>
<path d="M756.3,306.3 C757.5,307.9 762.3,312.1 762.7,314.8 C763.1,317.5 759.2,320.0 758.5,321.2" fill="none" stroke="#86c08a" stroke-width="1.0" stroke-linecap="round" stroke-linejoin="round" stroke-opacity="0.6"/>
<path d="M1088.8,472.7 C1090.5,475.4 1095.1,482.5 1098.1,487.7 C1101.0,492.8 1102.1,496.5 1105.0,501.5 C1107.9,506.5 1112.5,512.8 1114.2,515.3" fill="none" stroke="#84c17f" stroke-width="1.4" stroke-linecap="round" stroke-linejoin="round" stroke-opacity="0.8"/>
<path d="M1098.1,471.5 L1141.9,514.2" fill="none" stroke="#9ccf93" stroke-width="1.0" stroke-linecap="round" stroke-linejoin="round" stroke-opacity="0.7"/>
<path d="M1154.6,514.2 L1154.6,507.3 L1161.5,507.3 L1161.5,514.2" fill="none" stroke="#84c17f" stroke-width="1.2" stroke-linecap="round" stroke-linejoin="round" stroke-opacity="0.8"/>
<path d="M1170.7,514.2 L1171.4,507.3 L1178.8,506.1" fill="none" stroke="#84c17f" stroke-width="1.2" stroke-linecap="round" stroke-linejoin="round" stroke-opacity="0.8"/>
<path d="M646.2,350.8 C653.6,347.0 679.6,334.9 687.4,329.6 C695.3,324.3 690.1,323.8 689.6,321.2 C689.0,318.5 685.2,316.0 684.3,314.8" fill="none" stroke="#8a8a8a" stroke-width="0.7" stroke-linecap="round" stroke-linejoin="round" stroke-opacity="0.8"/>
<path d="M1010.3,302.5 C1007.8,308.6 999.4,323.9 996.5,336.0 C993.7,348.1 994.0,362.6 994.4,369.8 C994.8,377.0 1000.6,371.6 998.7,376.2 C996.8,380.7 986.5,391.8 983.9,395.2" fill="none" stroke="#8a8a8a" stroke-width="0.8" stroke-linecap="round" stroke-linejoin="round" stroke-opacity="0.8"/>
<path d="M859.2,302.9 C859.4,307.6 859.3,319.0 860.2,328.8 C861.1,338.7 863.2,346.6 864.0,357.7 C864.8,368.8 864.5,384.5 864.6,390.4" fill="none" stroke="#8a8a8a" stroke-width="0.8" stroke-linecap="round" stroke-linejoin="round" stroke-opacity="0.6"/>
<path d="M1045.0,439.2 C1047.5,437.8 1052.6,432.4 1058.8,431.1 C1065.1,429.9 1071.7,431.0 1079.6,432.3 C1087.5,433.5 1094.4,435.6 1102.7,438.1 C1111.0,440.6 1117.4,443.2 1125.7,446.1 C1134.0,449.0 1140.1,452.3 1148.8,454.2 C1157.5,456.1 1164.2,456.3 1174.2,456.5 C1184.1,456.7 1198.8,455.6 1204.2,455.4" fill="none" stroke="#8a8a8a" stroke-width="0.8" stroke-linecap="round" stroke-linejoin="round" stroke-opacity="0.8"/>
<path d="M1058.8,431.1 C1058.0,433.8 1053.4,440.5 1054.2,446.1 C1055.1,451.7 1060.5,458.5 1063.5,462.3 C1066.4,466.0 1069.1,466.1 1070.4,466.9" fill="none" stroke="#8a8a8a" stroke-width="0.7" stroke-linecap="round" stroke-linejoin="round" stroke-opacity="0.6"/>
<path d="M767.3,501.5 C768.3,499.9 767.9,495.8 773.1,492.3 C778.3,488.8 787.8,485.5 796.2,481.9 C804.5,478.4 811.8,477.7 819.2,472.7 C826.7,467.7 831.9,460.9 837.7,454.2 C843.5,447.6 845.7,441.4 851.5,435.8 C857.4,430.2 863.4,425.2 870.0,423.1 C876.7,421.0 882.9,424.3 888.5,424.2 C894.1,424.1 898.9,422.9 901.2,422.6" fill="none" stroke="#8a8a8a" stroke-width="0.8" stroke-linecap="round" stroke-linejoin="round" stroke-opacity="0.7"/>
<path d="M895.0,479.6 C897.5,481.5 902.6,487.7 908.8,490.0 C915.1,492.3 922.6,492.1 929.6,492.3 C936.7,492.5 943.1,489.9 948.1,491.2 C953.1,492.4 955.7,497.8 957.3,499.2" fill="none" stroke="#8a8a8a" stroke-width="0.7" stroke-linecap="round" stroke-linejoin="round" stroke-opacity="0.6"/>
<path d="M957.3,464.6 C959.8,463.9 966.6,461.9 971.2,460.5 C975.7,459.0 977.7,457.7 982.7,456.5 C987.7,455.4 991.4,455.5 998.9,454.2 C1006.3,453.0 1015.7,451.9 1024.2,449.6 C1032.8,447.3 1042.2,443.0 1046.2,441.5" fill="none" stroke="#8a8a8a" stroke-width="0.8" stroke-linecap="round" stroke-linejoin="round" stroke-opacity="0.7"/>
<path d="M991.9,478.5 C995.3,478.1 1004.6,477.8 1010.4,476.2 C1016.2,474.5 1017.8,473.4 1024.2,469.2 C1030.7,465.1 1042.2,456.0 1046.2,453.1" fill="none" stroke="#8a8a8a" stroke-width="0.7" stroke-linecap="round" stroke-linejoin="round" stroke-opacity="0.5"/>
<path d="M634.6,302.5 C637.0,305.5 643.9,313.4 648.3,319.0 C652.7,324.7 657.0,331.2 658.9,333.8" fill="none" stroke="#f5b46e" stroke-width="1.0" stroke-linecap="round" stroke-linejoin="round" stroke-opacity="0.9"/>
<path d="M856.9,328.8 C857.0,334.0 857.1,349.0 857.3,357.7 C857.5,366.3 856.2,371.0 858.3,376.9 C860.3,382.8 865.6,386.1 868.8,390.4 C872.1,394.7 875.2,399.1 876.5,401.0" fill="none" stroke="#f5b46e" stroke-width="1.3" stroke-linecap="round" stroke-linejoin="round"/>
<path d="M858.3,376.9 C859.5,377.1 862.2,376.8 865.0,377.9 C867.8,378.9 872.1,381.8 873.7,382.7" fill="none" stroke="#f5b46e" stroke-width="1.2" stroke-linecap="round" stroke-linejoin="round"/>
<path d="M889.0,330.8 C891.6,330.9 899.1,330.0 903.5,331.7 C907.8,333.5 911.2,336.8 913.1,340.4 C915.0,344.0 915.2,348.5 914.0,351.9 C912.8,355.4 908.2,357.2 906.3,359.6 C904.4,362.0 903.5,362.3 903.5,365.4 C903.5,368.5 905.1,372.8 906.3,376.9 C907.6,381.1 909.0,385.0 910.2,388.5 C911.4,391.9 912.6,394.8 913.1,396.2" fill="none" stroke="#f5b46e" stroke-width="1.4" stroke-linecap="round" stroke-linejoin="round"/>
<path d="M842.3,472.7 C839.4,473.9 833.2,477.8 826.2,479.6 C819.1,481.5 809.7,480.0 803.1,483.1 C796.4,486.2 794.6,492.4 789.2,496.9 C783.8,501.5 777.9,505.1 773.1,508.5 C768.3,511.8 764.6,514.1 762.7,515.4" fill="none" stroke="#f5b46e" stroke-width="1.5" stroke-linecap="round" stroke-linejoin="round"/>
<path d="M895.0,446.2 C896.7,447.6 901.3,451.1 904.2,454.2 C907.1,457.4 908.7,460.8 911.2,463.5 C913.6,466.2 916.8,468.2 918.1,469.2" fill="none" stroke="#f5b46e" stroke-width="1.2" stroke-linecap="round" stroke-linejoin="round"/>
<path d="M888.5,439.2 C890.1,440.5 895.2,443.5 897.7,446.2 C900.2,448.9 901.5,452.8 902.3,454.2" fill="none" stroke="#f5b46e" stroke-width="1.2" stroke-linecap="round" stroke-linejoin="round"/>
<path d="M1058.8,487.7 C1058.2,490.1 1055.8,496.5 1055.4,501.5 C1055.0,506.5 1056.3,512.8 1056.5,515.3" fill="none" stroke="#f5b46e" stroke-width="1.3" stroke-linecap="round" stroke-linejoin="round"/>
<path d="M1183.4,469.2 C1182.8,473.4 1181.6,484.8 1179.9,492.3 C1178.3,499.7 1176.5,506.6 1174.2,510.7 C1171.9,514.9 1168.5,514.5 1167.3,515.3" fill="none" stroke="#f8a78c" stroke-width="1.4" stroke-linecap="round" stroke-linejoin="round"/>
<path d="M1183.4,469.2 L1204.2,476.1" fill="none" stroke="#f5b46e" stroke-width="1.0" stroke-linecap="round" stroke-linejoin="round"/>
<path d="M644.1,348.7 L685.3,314.8" fill="none" stroke="#f9876e" stroke-width="1.4" stroke-linecap="round" stroke-linejoin="round"/>
<path d="M685.3,314.8 L721.3,310.2 L722.1,310.6" fill="none" stroke="#f9a07e" stroke-width="1.3" stroke-linecap="round" stroke-linejoin="round"/>
<path d="M722.1,310.6 C725.1,311.6 732.1,313.8 738.5,316.3 C744.9,318.9 750.8,321.7 757.7,325.0 C764.6,328.3 773.5,332.9 776.9,334.6" fill="none" stroke="#b58a5e" stroke-width="1.5" stroke-linecap="round" stroke-linejoin="round"/>
<path d="M784.6,499.2 C786.3,499.0 790.5,497.7 793.8,498.1 C797.2,498.5 801.4,500.9 803.1,501.5" fill="none" stroke="#f98f7a" stroke-width="1.8" stroke-linecap="round" stroke-linejoin="round"/>
<path d="M603.9,391.4 L633.5,363.5 L644.5,349.1" fill="none" stroke="#dd5f88" stroke-width="1.7" stroke-linecap="round" stroke-linejoin="round"/>
<path d="M801.9,346.2 C803.7,347.2 808.3,350.4 811.5,351.9 C814.8,353.5 819.7,354.6 820.0,354.8 C820.3,355.1 812.9,353.4 813.5,353.3 C814.0,353.2 821.3,354.0 823.0,354.2" fill="none" stroke="#f2958c" stroke-width="1.3" stroke-linecap="round" stroke-linejoin="round"/>
<path d="M823.0,354.2 C824.3,353.9 826.8,354.4 830.4,352.9 C834.0,351.3 838.9,348.9 843.1,345.5 C847.3,342.1 850.6,337.3 853.7,333.8 C856.7,330.4 858.9,327.8 860.0,326.4" fill="none" stroke="#e7708f" stroke-width="1.6" stroke-linecap="round" stroke-linejoin="round"/>
<path d="M858.9,301.7 L858.9,326.4" fill="none" stroke="#ec8fa3" stroke-width="1.4" stroke-linecap="round" stroke-linejoin="round"/>
<path d="M860.0,326.4 C863.1,326.6 871.7,326.6 876.9,327.1 C882.2,327.5 886.9,328.5 889.0,328.8" fill="none" stroke="#e7708f" stroke-width="1.8" stroke-linecap="round" stroke-linejoin="round"/>
<path d="M889.0,328.8 C890.6,329.1 895.1,329.9 897.7,330.4 C900.3,330.9 902.4,331.5 903.5,331.7" fill="none" stroke="#e7708f" stroke-width="2.5" stroke-linecap="round" stroke-linejoin="round"/>
<path d="M897.7,301.5 C896.7,304.0 893.5,310.5 891.9,315.4 C890.4,320.3 890.2,324.7 889.0,328.8 C887.8,333.0 886.6,334.0 885.2,338.5 C883.8,343.0 882.2,347.6 881.3,353.8 C880.5,360.1 880.7,367.5 880.4,373.1 C880.0,378.6 880.1,379.6 879.4,384.6 C878.7,389.6 875.9,398.2 876.5,401.0 C877.1,403.7 881.4,396.2 882.7,400.0 C884.0,403.8 885.3,415.7 883.9,421.9 C882.4,428.2 880.0,427.8 874.6,434.6 C869.2,441.5 859.3,453.4 853.9,460.0 C848.5,466.7 848.8,466.6 844.6,471.5 C840.5,476.5 835.3,483.5 830.8,487.7 C826.2,491.9 824.2,492.1 819.2,494.6 C814.3,497.1 806.6,497.6 803.1,501.5 C799.5,505.5 800.2,513.8 799.6,516.5" fill="none" stroke="#e7708f" stroke-width="1.7" stroke-linecap="round" stroke-linejoin="round"/>
<path d="M879.4,384.6 C881.0,384.8 884.8,384.7 888.1,385.6 C891.4,386.4 893.9,387.7 897.7,389.4 C901.5,391.2 907.8,394.7 909.2,395.2 C910.7,395.7 904.3,391.3 905.6,392.0 C906.8,392.8 913.1,396.0 916.2,399.4 C919.2,402.9 922.6,411.0 922.5,411.1 C922.4,411.2 915.7,400.1 915.8,400.0 C915.8,399.9 918.1,407.5 922.7,410.4 C927.3,413.3 935.3,413.5 941.2,416.2 C947.0,418.9 950.0,423.1 955.0,425.4 C960.0,427.7 966.4,428.2 968.9,428.8" fill="none" stroke="#e7708f" stroke-width="1.6" stroke-linecap="round" stroke-linejoin="round"/>
<path d="M979.6,301.7 C980.8,304.4 984.4,310.8 986.0,316.9 C987.5,323.1 987.1,329.1 988.1,336.0 C989.0,342.8 990.3,348.9 991.3,355.0 C992.2,361.1 993.8,364.5 993.4,369.8 C993.0,375.1 991.6,379.7 989.1,384.6 C986.7,389.6 982.9,392.6 979.6,397.3 C976.4,402.1 972.3,410.6 971.2,411.1 C970.1,411.5 973.7,397.8 973.5,400.0 C973.3,402.2 970.0,416.8 970.0,423.1 C970.0,429.3 971.2,428.4 973.5,434.6 C975.8,440.8 976.9,450.6 982.7,457.7 C988.5,464.8 1000.0,468.5 1005.8,473.9 C1011.6,479.3 1011.7,484.0 1015.0,487.7 C1018.3,491.4 1022.2,489.6 1024.2,494.6 C1026.3,499.6 1026.1,511.7 1026.5,515.4" fill="none" stroke="#e7708f" stroke-width="1.8" stroke-linecap="round" stroke-linejoin="round"/>
<path d="M968.4,423.1 C969.0,425.2 969.4,428.4 971.6,434.6 C973.9,440.8 979.2,453.5 980.9,457.7" fill="none" stroke="#e7708f" stroke-width="1.5" stroke-linecap="round" stroke-linejoin="round"/>
<path d="M844.6,471.5 C847.9,471.5 857.7,470.7 863.1,471.1 C868.5,471.5 870.5,472.5 874.6,473.9 C878.8,475.2 881.4,477.6 886.2,478.5 C890.9,479.4 896.7,480.0 901.2,478.9 C905.7,477.9 907.7,474.4 911.2,472.7 C914.6,471.0 917.1,469.0 920.4,469.2 C923.7,469.4 925.9,472.0 929.6,473.9 C933.4,475.7 937.0,477.1 941.2,479.6 C945.3,482.1 949.0,484.2 952.7,487.7 C956.4,491.2 957.8,498.0 961.9,499.2 C966.1,500.5 972.0,495.9 975.8,494.6 C979.5,493.4 978.5,491.7 982.7,492.3 C986.9,492.9 992.2,497.3 998.9,498.1 C1005.5,498.9 1015.1,497.8 1019.6,496.9 C1024.2,496.1 1019.7,495.3 1024.2,493.5 C1028.8,491.6 1038.8,489.0 1045.0,486.5 C1051.2,484.0 1053.4,481.7 1058.8,479.6 C1064.2,477.5 1069.2,476.8 1075.0,475.0 C1080.8,473.1 1086.2,471.3 1091.1,469.2 C1096.1,467.1 1098.5,464.6 1102.7,463.4 C1106.8,462.3 1108.0,462.1 1114.2,462.7 C1120.4,463.4 1133.1,466.1 1137.3,466.9" fill="none" stroke="#e7708f" stroke-width="1.7" stroke-linecap="round" stroke-linejoin="round"/>
<path d="M1137.3,466.9 C1141.4,466.7 1152.5,465.7 1160.3,465.7 C1168.2,465.7 1173.2,465.8 1181.1,466.9 C1189.0,468.0 1200.0,471.1 1204.2,472.0" fill="none" stroke="#ea86a0" stroke-width="1.3" stroke-linecap="round" stroke-linejoin="round"/>
<path d="M1045.0,486.5 C1047.5,485.3 1053.4,481.7 1058.8,479.6 C1064.2,477.5 1069.2,476.8 1075.0,475.0 C1080.8,473.1 1088.2,470.2 1091.1,469.2" fill="none" stroke="#e7708f" stroke-width="2.3" stroke-linecap="round" stroke-linejoin="round"/>
<path d="M1051.9,483.0 C1051.3,485.5 1048.9,491.1 1048.5,496.9 C1048.0,502.7 1049.4,512.0 1049.6,515.3" fill="none" stroke="#e7708f" stroke-width="1.6" stroke-linecap="round" stroke-linejoin="round"/>
<path d="M1024.2,494.6 C1025.9,493.6 1029.5,490.3 1033.5,488.9 C1037.4,487.4 1043.9,487.0 1046.2,486.5" fill="none" stroke="#e7708f" stroke-width="1.8" stroke-linecap="round" stroke-linejoin="round"/>
<text x="855.8" y="373.6" text-anchor="middle" style="font-size:9.2px;fill:#3d3d3d;paint-order:stroke;stroke:#ffffff;stroke-width:1.8px;stroke-linejoin:round;stroke-opacity:0.75;">Vallejo</text>
<text x="943.9" y="433.7" text-anchor="middle" style="font-size:7.4px;fill:#3d3d3d;paint-order:stroke;stroke:#ffffff;stroke-width:1.6px;stroke-linejoin:round;stroke-opacity:0.75;">Benicia</text>
<text x="965.4" y="474.5" text-anchor="middle" style="font-size:6.9px;fill:#3d3d3d;paint-order:stroke;stroke:#ffffff;stroke-width:1.6px;stroke-linejoin:round;stroke-opacity:0.75;">Martinez</text>
<text x="827.8" y="470.6" text-anchor="middle" style="font-size:7.4px;fill:#444;paint-order:stroke;stroke:#ffffff;stroke-width:1.6px;stroke-linejoin:round;stroke-opacity:0.75;">Hercules</text>
<text x="818.5" y="485.4" text-anchor="middle" style="font-size:7.4px;fill:#444;paint-order:stroke;stroke:#ffffff;stroke-width:1.6px;stroke-linejoin:round;stroke-opacity:0.75;">Pinole</text>
<text x="1123.4" y="459.7" text-anchor="middle" style="font-size:7.6px;fill:#444;paint-order:stroke;stroke:#ffffff;stroke-width:1.6px;stroke-linejoin:round;stroke-opacity:0.75;">Bay Point</text>
<text x="1174.2" y="459.7" text-anchor="start" style="font-size:7.6px;fill:#444;paint-order:stroke;stroke:#ffffff;stroke-width:1.6px;stroke-linejoin:round;stroke-opacity:0.75;">Pittsburg</text>
<text x="1039.2" y="516.0" text-anchor="start" style="font-size:8.6px;fill:#333;paint-order:stroke;stroke:#ffffff;stroke-width:1.6px;stroke-linejoin:round;stroke-opacity:0.75;">Concord</text>
<text x="761.9" y="327.3" text-anchor="middle" style="font-size:7.0px;fill:#3f9045;font-style:italic;paint-order:stroke;stroke:#e8f4e0;stroke-width:1.0px;stroke-linejoin:round;stroke-opacity:0.75;">San Pablo</text>
<text x="759.2" y="336.5" text-anchor="middle" style="font-size:7.0px;fill:#3f9045;font-style:italic;paint-order:stroke;stroke:#e8f4e0;stroke-width:1.0px;stroke-linejoin:round;stroke-opacity:0.75;">Bay Nation</text>
<text x="761.5" y="344.8" text-anchor="middle" style="font-size:7.0px;fill:#3f9045;font-style:italic;paint-order:stroke;stroke:#e8f4e0;stroke-width:1.0px;stroke-linejoin:round;stroke-opacity:0.75;">Wildlife</text>
<text x="761.9" y="353.8" text-anchor="middle" style="font-size:7.0px;fill:#3f9045;font-style:italic;paint-order:stroke;stroke:#e8f4e0;stroke-width:1.0px;stroke-linejoin:round;stroke-opacity:0.75;">Refuge</text>
<text x="789.8" y="311.5" text-anchor="middle" style="font-size:7.0px;fill:#3f9045;font-style:italic;paint-order:stroke;stroke:#e8f4e0;stroke-width:1.0px;stroke-linejoin:round;stroke-opacity:0.75;">Area</text>
<text x="675.9" y="413.4" text-anchor="middle" style="font-size:6.8px;fill:#3f9045;font-style:italic;paint-order:stroke;stroke:#cfe6ea;stroke-width:1.0px;stroke-linejoin:round;stroke-opacity:0.75;">San Pablo</text>
<text x="675.9" y="422.4" text-anchor="middle" style="font-size:6.8px;fill:#3f9045;font-style:italic;paint-order:stroke;stroke:#cfe6ea;stroke-width:1.0px;stroke-linejoin:round;stroke-opacity:0.75;">Bay Wildlife</text>
<text x="675.9" y="431.2" text-anchor="middle" style="font-size:6.8px;fill:#3f9045;font-style:italic;paint-order:stroke;stroke:#cfe6ea;stroke-width:1.0px;stroke-linejoin:round;stroke-opacity:0.75;">Area</text>
<text x="1132.8" y="341.7" text-anchor="middle" style="font-size:6.3px;fill:#3a8a3e;font-style:italic;paint-order:stroke;stroke:#d5edc0;stroke-width:1.0px;stroke-linejoin:round;stroke-opacity:0.75;">Grizzly</text>
<text x="1133.4" y="348.9" text-anchor="middle" style="font-size:6.3px;fill:#3a8a3e;font-style:italic;paint-order:stroke;stroke:#d5edc0;stroke-width:1.0px;stroke-linejoin:round;stroke-opacity:0.75;">Island Wildlife</text>
<text x="1133.4" y="356.3" text-anchor="middle" style="font-size:6.3px;fill:#3a8a3e;font-style:italic;paint-order:stroke;stroke:#d5edc0;stroke-width:1.0px;stroke-linejoin:round;stroke-opacity:0.75;">Area–Grizzly</text>
<text x="1133.4" y="363.5" text-anchor="middle" style="font-size:6.3px;fill:#3a8a3e;font-style:italic;paint-order:stroke;stroke:#d5edc0;stroke-width:1.0px;stroke-linejoin:round;stroke-opacity:0.75;">Island Unit</text>
<text x="1072.0" y="437.6" text-anchor="middle" style="font-size:6.6px;fill:#b03a3a;font-style:italic;paint-order:stroke;stroke:#f5e6e0;stroke-width:1.0px;stroke-linejoin:round;stroke-opacity:0.75;">Military</text>
<text x="1072.0" y="444.8" text-anchor="middle" style="font-size:6.6px;fill:#b03a3a;font-style:italic;paint-order:stroke;stroke:#f5e6e0;stroke-width:1.0px;stroke-linejoin:round;stroke-opacity:0.75;">Ocean</text>
<text x="1072.0" y="451.9" text-anchor="middle" style="font-size:6.6px;fill:#b03a3a;font-style:italic;paint-order:stroke;stroke:#f5e6e0;stroke-width:1.0px;stroke-linejoin:round;stroke-opacity:0.75;">Terminal</text>
<text x="1072.0" y="459.3" text-anchor="middle" style="font-size:6.6px;fill:#b03a3a;font-style:italic;paint-order:stroke;stroke:#f5e6e0;stroke-width:1.0px;stroke-linejoin:round;stroke-opacity:0.75;">Concord</text>
<rect x="621.2" y="352.0" width="24.0" height="10.2" rx="1" fill="#efccd4" stroke="#dca3b2" stroke-width="0.6"/>
<text x="633.2" y="359.6" text-anchor="middle" style="font-size:7.1px;fill:#6a1e36">CA 37</text>
<rect x="778.8" y="335.6" width="23.2" height="10.6" rx="1" fill="#f6d4d2" stroke="#e3a6a8" stroke-width="0.6"/>
<text x="790.4" y="343.4" text-anchor="middle" style="font-size:7.1px;fill:#7a2a2a">CA 37</text>
<path d="M912.4,317.5 L914.6,313.6 L916.8,317.5 Z" fill="#d08f55"/>
<path d="M845.9,357.1 L848.1,353.2 L850.3,357.1 Z" fill="#d08f55"/>
<path d="M845.5,357.2 L847.7,353.2 L849.9,357.2 Z" fill="#d08f55"/>
<path d="M866.0,429.9 L868.2,426.0 L870.4,429.9 Z" fill="#d08f55"/>
<path d="M878.9,441.0 L881.1,437.0 L883.3,441.0 Z" fill="#d08f55"/>
<path d="M921.6,441.5 L923.8,437.5 L926.0,441.5 Z" fill="#d08f55"/>
<path d="M899.3,442.6 L901.5,438.6 L903.7,442.6 Z" fill="#d08f55"/>
<path d="M906.6,457.1 L908.8,453.2 L911.0,457.1 Z" fill="#d08f55"/>
<path d="M900.2,467.5 L902.4,463.6 L904.6,467.5 Z" fill="#d08f55"/>
<path d="M942.4,471.7 L944.6,467.7 L946.8,471.7 Z" fill="#d08f55"/>
<path d="M951.0,483.2 L953.2,479.3 L955.4,483.2 Z" fill="#d08f55"/>
<path d="M903.9,505.2 L906.1,501.2 L908.3,505.2 Z" fill="#d08f55"/>
<path d="M897.4,510.2 L899.6,506.3 L901.8,510.2 Z" fill="#d08f55"/>
<path d="M964.3,510.2 L966.5,506.3 L968.7,510.2 Z" fill="#d08f55"/>
<path d="M1141.5,510.2 L1143.7,506.2 L1145.9,510.2 Z" fill="#d08f55"/>
<path d="M607.3,506.8 L609.5,502.8 L611.7,506.8 Z" fill="#d08f55"/>
<text x="863.1" y="326.9" text-anchor="middle" style="font-size:6.2px;fill:#c03a4a;font-style:italic;paint-order:stroke;stroke:#ffffff;stroke-width:1.4px;stroke-linejoin:round;stroke-opacity:0.75;">19</text>
<text x="880.4" y="327.9" text-anchor="middle" style="font-size:6.2px;fill:#c03a4a;font-style:italic;paint-order:stroke;stroke:#ffffff;stroke-width:1.4px;stroke-linejoin:round;stroke-opacity:0.75;">20</text>
<text x="891.5" y="326.5" text-anchor="middle" style="font-size:6.2px;fill:#c03a4a;font-style:italic;paint-order:stroke;stroke:#ffffff;stroke-width:1.4px;stroke-linejoin:round;stroke-opacity:0.75;">33A</text>
<text x="886.2" y="337.5" text-anchor="middle" style="font-size:6.2px;fill:#c03a4a;font-style:italic;paint-order:stroke;stroke:#ffffff;stroke-width:1.4px;stroke-linejoin:round;stroke-opacity:0.75;">33</text>
<text x="881.7" y="346.2" text-anchor="middle" style="font-size:6.2px;fill:#c03a4a;font-style:italic;paint-order:stroke;stroke:#ffffff;stroke-width:1.4px;stroke-linejoin:round;stroke-opacity:0.75;">32</text>
<text x="880.0" y="352.9" text-anchor="middle" style="font-size:6.2px;fill:#c03a4a;font-style:italic;paint-order:stroke;stroke:#ffffff;stroke-width:1.4px;stroke-linejoin:round;stroke-opacity:0.75;">32A</text>
<text x="880.4" y="361.2" text-anchor="middle" style="font-size:6.2px;fill:#c03a4a;font-style:italic;paint-order:stroke;stroke:#ffffff;stroke-width:1.4px;stroke-linejoin:round;stroke-opacity:0.75;">31B</text>
<text x="880.8" y="368.7" text-anchor="middle" style="font-size:6.2px;fill:#c03a4a;font-style:italic;paint-order:stroke;stroke:#ffffff;stroke-width:1.4px;stroke-linejoin:round;stroke-opacity:0.75;">31B</text>
<text x="880.4" y="375.6" text-anchor="middle" style="font-size:6.2px;fill:#c03a4a;font-style:italic;paint-order:stroke;stroke:#ffffff;stroke-width:1.4px;stroke-linejoin:round;stroke-opacity:0.75;">30C</text>
<text x="876.9" y="384.6" text-anchor="middle" style="font-size:6.2px;fill:#c03a4a;font-style:italic;paint-order:stroke;stroke:#ffffff;stroke-width:1.4px;stroke-linejoin:round;stroke-opacity:0.75;">1A</text>
<text x="885.4" y="387.5" text-anchor="middle" style="font-size:6.2px;fill:#c03a4a;font-style:italic;paint-order:stroke;stroke:#ffffff;stroke-width:1.4px;stroke-linejoin:round;stroke-opacity:0.75;">1C</text>
<text x="876.5" y="395.2" text-anchor="middle" style="font-size:6.2px;fill:#c03a4a;font-style:italic;paint-order:stroke;stroke:#ffffff;stroke-width:1.4px;stroke-linejoin:round;stroke-opacity:0.75;">30C</text>
<text x="880.4" y="401.5" text-anchor="middle" style="font-size:6.2px;fill:#c03a4a;font-style:italic;paint-order:stroke;stroke:#ffffff;stroke-width:1.4px;stroke-linejoin:round;stroke-opacity:0.75;">29B</text>
<text x="853.5" y="336.5" text-anchor="middle" style="font-size:6.2px;fill:#c03a4a;font-style:italic;paint-order:stroke;stroke:#ffffff;stroke-width:1.4px;stroke-linejoin:round;stroke-opacity:0.75;">19</text>
<text x="845.8" y="346.2" text-anchor="middle" style="font-size:6.2px;fill:#c03a4a;font-style:italic;paint-order:stroke;stroke:#ffffff;stroke-width:1.4px;stroke-linejoin:round;stroke-opacity:0.75;">18</text>
<text x="901.2" y="391.9" text-anchor="middle" style="font-size:6.2px;fill:#c03a4a;font-style:italic;paint-order:stroke;stroke:#ffffff;stroke-width:1.4px;stroke-linejoin:round;stroke-opacity:0.75;">1D</text>
<text x="913.5" y="399.0" text-anchor="middle" style="font-size:6.2px;fill:#c03a4a;font-style:italic;paint-order:stroke;stroke:#ffffff;stroke-width:1.4px;stroke-linejoin:round;stroke-opacity:0.75;">3A</text>
<text x="831.4" y="353.9" text-anchor="middle" style="font-size:6.2px;fill:#c03a4a;font-style:italic;paint-order:stroke;stroke:#ffffff;stroke-width:1.4px;stroke-linejoin:round;stroke-opacity:0.75;">17</text>
<text x="984.9" y="317.3" text-anchor="middle" style="font-size:6.2px;fill:#c03a4a;font-style:italic;paint-order:stroke;stroke:#ffffff;stroke-width:1.4px;stroke-linejoin:round;stroke-opacity:0.75;">65</text>
<text x="987.4" y="323.7" text-anchor="middle" style="font-size:6.2px;fill:#c03a4a;font-style:italic;paint-order:stroke;stroke:#ffffff;stroke-width:1.4px;stroke-linejoin:round;stroke-opacity:0.75;">65</text>
<text x="990.6" y="353.3" text-anchor="middle" style="font-size:6.2px;fill:#c03a4a;font-style:italic;paint-order:stroke;stroke:#ffffff;stroke-width:1.4px;stroke-linejoin:round;stroke-opacity:0.75;">63</text>
<text x="990.8" y="361.3" text-anchor="middle" style="font-size:6.2px;fill:#c03a4a;font-style:italic;paint-order:stroke;stroke:#ffffff;stroke-width:1.4px;stroke-linejoin:round;stroke-opacity:0.75;">63</text>
<text x="986.4" y="388.9" text-anchor="middle" style="font-size:6.2px;fill:#c03a4a;font-style:italic;paint-order:stroke;stroke:#ffffff;stroke-width:1.4px;stroke-linejoin:round;stroke-opacity:0.75;">61</text>
<text x="982.8" y="394.6" text-anchor="middle" style="font-size:6.2px;fill:#c03a4a;font-style:italic;paint-order:stroke;stroke:#ffffff;stroke-width:1.4px;stroke-linejoin:round;stroke-opacity:0.75;">61</text>
<text x="973.3" y="409.6" text-anchor="middle" style="font-size:6.2px;fill:#c03a4a;font-style:italic;paint-order:stroke;stroke:#ffffff;stroke-width:1.4px;stroke-linejoin:round;stroke-opacity:0.75;">60</text>
<text x="900.9" y="392.4" text-anchor="middle" style="font-size:6.2px;fill:#c03a4a;font-style:italic;paint-order:stroke;stroke:#ffffff;stroke-width:1.4px;stroke-linejoin:round;stroke-opacity:0.75;">1D</text>
<text x="914.0" y="399.0" text-anchor="middle" style="font-size:6.2px;fill:#c03a4a;font-style:italic;paint-order:stroke;stroke:#ffffff;stroke-width:1.4px;stroke-linejoin:round;stroke-opacity:0.75;">3A</text>
<text x="922.2" y="411.5" text-anchor="middle" style="font-size:6.2px;fill:#c03a4a;font-style:italic;paint-order:stroke;stroke:#ffffff;stroke-width:1.4px;stroke-linejoin:round;stroke-opacity:0.75;">3B</text>
<text x="933.8" y="415.7" text-anchor="middle" style="font-size:6.2px;fill:#c03a4a;font-style:italic;paint-order:stroke;stroke:#ffffff;stroke-width:1.4px;stroke-linejoin:round;stroke-opacity:0.75;">4</text>
<text x="942.3" y="417.1" text-anchor="middle" style="font-size:6.2px;fill:#c03a4a;font-style:italic;paint-order:stroke;stroke:#ffffff;stroke-width:1.4px;stroke-linejoin:round;stroke-opacity:0.75;">4</text>
<text x="953.9" y="425.8" text-anchor="middle" style="font-size:6.2px;fill:#c03a4a;font-style:italic;paint-order:stroke;stroke:#ffffff;stroke-width:1.4px;stroke-linejoin:round;stroke-opacity:0.75;">6</text>
<text x="960.3" y="428.8" text-anchor="middle" style="font-size:6.2px;fill:#c03a4a;font-style:italic;paint-order:stroke;stroke:#ffffff;stroke-width:1.4px;stroke-linejoin:round;stroke-opacity:0.75;">7A</text>
<text x="961.2" y="436.5" text-anchor="middle" style="font-size:6.2px;fill:#c03a4a;font-style:italic;paint-order:stroke;stroke:#ffffff;stroke-width:1.4px;stroke-linejoin:round;stroke-opacity:0.75;">7B</text>
<text x="969.5" y="424.9" text-anchor="middle" style="font-size:6.2px;fill:#c03a4a;font-style:italic;paint-order:stroke;stroke:#ffffff;stroke-width:1.4px;stroke-linejoin:round;stroke-opacity:0.75;">58</text>
<text x="973.0" y="434.6" text-anchor="middle" style="font-size:6.2px;fill:#c03a4a;font-style:italic;paint-order:stroke;stroke:#ffffff;stroke-width:1.4px;stroke-linejoin:round;stroke-opacity:0.75;">58A</text>
<text x="973.5" y="409.7" text-anchor="middle" style="font-size:6.2px;fill:#c03a4a;font-style:italic;paint-order:stroke;stroke:#ffffff;stroke-width:1.4px;stroke-linejoin:round;stroke-opacity:0.75;">60</text>
<text x="983.9" y="460.5" text-anchor="middle" style="font-size:6.2px;fill:#c03a4a;font-style:italic;paint-order:stroke;stroke:#ffffff;stroke-width:1.4px;stroke-linejoin:round;stroke-opacity:0.75;">56</text>
<text x="1005.3" y="475.0" text-anchor="middle" style="font-size:6.2px;fill:#c03a4a;font-style:italic;paint-order:stroke;stroke:#ffffff;stroke-width:1.4px;stroke-linejoin:round;stroke-opacity:0.75;">54</text>
<text x="1011.5" y="482.6" text-anchor="middle" style="font-size:6.2px;fill:#c03a4a;font-style:italic;paint-order:stroke;stroke:#ffffff;stroke-width:1.4px;stroke-linejoin:round;stroke-opacity:0.75;">54</text>
<text x="1018.5" y="490.5" text-anchor="middle" style="font-size:6.2px;fill:#c03a4a;font-style:italic;paint-order:stroke;stroke:#ffffff;stroke-width:1.4px;stroke-linejoin:round;stroke-opacity:0.75;">53</text>
<text x="1016.6" y="499.2" text-anchor="middle" style="font-size:6.2px;fill:#c03a4a;font-style:italic;paint-order:stroke;stroke:#ffffff;stroke-width:1.4px;stroke-linejoin:round;stroke-opacity:0.75;">12A</text>
<text x="999.5" y="500.4" text-anchor="middle" style="font-size:6.2px;fill:#c03a4a;font-style:italic;paint-order:stroke;stroke:#ffffff;stroke-width:1.4px;stroke-linejoin:round;stroke-opacity:0.75;">11</text>
<text x="981.5" y="494.2" text-anchor="middle" style="font-size:6.2px;fill:#c03a4a;font-style:italic;paint-order:stroke;stroke:#ffffff;stroke-width:1.4px;stroke-linejoin:round;stroke-opacity:0.75;">10</text>
<text x="973.9" y="498.1" text-anchor="middle" style="font-size:6.2px;fill:#c03a4a;font-style:italic;paint-order:stroke;stroke:#ffffff;stroke-width:1.4px;stroke-linejoin:round;stroke-opacity:0.75;">9</text>
<text x="966.1" y="501.1" text-anchor="middle" style="font-size:6.2px;fill:#c03a4a;font-style:italic;paint-order:stroke;stroke:#ffffff;stroke-width:1.4px;stroke-linejoin:round;stroke-opacity:0.75;">9</text>
<text x="910.7" y="475.0" text-anchor="middle" style="font-size:6.2px;fill:#c03a4a;font-style:italic;paint-order:stroke;stroke:#ffffff;stroke-width:1.4px;stroke-linejoin:round;stroke-opacity:0.75;">5</text>
<text x="919.5" y="471.1" text-anchor="middle" style="font-size:6.2px;fill:#c03a4a;font-style:italic;paint-order:stroke;stroke:#ffffff;stroke-width:1.4px;stroke-linejoin:round;stroke-opacity:0.75;">5</text>
<text x="929.6" y="475.2" text-anchor="middle" style="font-size:6.2px;fill:#c03a4a;font-style:italic;paint-order:stroke;stroke:#ffffff;stroke-width:1.4px;stroke-linejoin:round;stroke-opacity:0.75;">6</text>
<text x="1038.1" y="488.9" text-anchor="middle" style="font-size:6.2px;fill:#c03a4a;font-style:italic;paint-order:stroke;stroke:#ffffff;stroke-width:1.4px;stroke-linejoin:round;stroke-opacity:0.75;">13</text>
<text x="1027.0" y="513.1" text-anchor="middle" style="font-size:6.2px;fill:#c03a4a;font-style:italic;paint-order:stroke;stroke:#ffffff;stroke-width:1.4px;stroke-linejoin:round;stroke-opacity:0.75;">52</text>
<text x="878.1" y="402.8" text-anchor="middle" style="font-size:6.2px;fill:#c03a4a;font-style:italic;paint-order:stroke;stroke:#ffffff;stroke-width:1.4px;stroke-linejoin:round;stroke-opacity:0.75;">29A</text>
<text x="883.9" y="424.0" text-anchor="middle" style="font-size:6.2px;fill:#c03a4a;font-style:italic;paint-order:stroke;stroke:#ffffff;stroke-width:1.4px;stroke-linejoin:round;stroke-opacity:0.75;">27</text>
<text x="874.6" y="436.5" text-anchor="middle" style="font-size:6.2px;fill:#c03a4a;font-style:italic;paint-order:stroke;stroke:#ffffff;stroke-width:1.4px;stroke-linejoin:round;stroke-opacity:0.75;">26</text>
<text x="853.2" y="460.5" text-anchor="middle" style="font-size:6.2px;fill:#c03a4a;font-style:italic;paint-order:stroke;stroke:#ffffff;stroke-width:1.4px;stroke-linejoin:round;stroke-opacity:0.75;">24</text>
<text x="846.9" y="469.2" text-anchor="middle" style="font-size:6.2px;fill:#c03a4a;font-style:italic;paint-order:stroke;stroke:#ffffff;stroke-width:1.4px;stroke-linejoin:round;stroke-opacity:0.75;">23</text>
<text x="833.1" y="487.7" text-anchor="middle" style="font-size:6.2px;fill:#c03a4a;font-style:italic;paint-order:stroke;stroke:#ffffff;stroke-width:1.4px;stroke-linejoin:round;stroke-opacity:0.75;">22</text>
<text x="820.4" y="495.3" text-anchor="middle" style="font-size:6.2px;fill:#c03a4a;font-style:italic;paint-order:stroke;stroke:#ffffff;stroke-width:1.4px;stroke-linejoin:round;stroke-opacity:0.75;">21</text>
<text x="810.5" y="498.1" text-anchor="middle" style="font-size:6.2px;fill:#c03a4a;font-style:italic;paint-order:stroke;stroke:#ffffff;stroke-width:1.4px;stroke-linejoin:round;stroke-opacity:0.75;">21</text>
<text x="803.5" y="508.5" text-anchor="middle" style="font-size:6.2px;fill:#c03a4a;font-style:italic;paint-order:stroke;stroke:#ffffff;stroke-width:1.4px;stroke-linejoin:round;stroke-opacity:0.75;">20</text>
<text x="862.4" y="472.7" text-anchor="middle" style="font-size:6.2px;fill:#c03a4a;font-style:italic;paint-order:stroke;stroke:#ffffff;stroke-width:1.4px;stroke-linejoin:round;stroke-opacity:0.75;">1</text>
<text x="885.5" y="479.6" text-anchor="middle" style="font-size:6.2px;fill:#c03a4a;font-style:italic;paint-order:stroke;stroke:#ffffff;stroke-width:1.4px;stroke-linejoin:round;stroke-opacity:0.75;">3</text>
<text x="1095.3" y="469.9" text-anchor="middle" style="font-size:6.2px;fill:#c03a4a;font-style:italic;paint-order:stroke;stroke:#ffffff;stroke-width:1.4px;stroke-linejoin:round;stroke-opacity:0.75;">17</text>
<text x="1070.4" y="477.7" text-anchor="middle" style="font-size:6.2px;fill:#c03a4a;font-style:italic;paint-order:stroke;stroke:#ffffff;stroke-width:1.4px;stroke-linejoin:round;stroke-opacity:0.75;">15B</text>
<text x="1053.1" y="488.8" text-anchor="middle" style="font-size:6.2px;fill:#c03a4a;font-style:italic;paint-order:stroke;stroke:#ffffff;stroke-width:1.4px;stroke-linejoin:round;stroke-opacity:0.75;">3B</text>
<text x="1051.2" y="495.7" text-anchor="middle" style="font-size:6.2px;fill:#c03a4a;font-style:italic;paint-order:stroke;stroke:#ffffff;stroke-width:1.4px;stroke-linejoin:round;stroke-opacity:0.75;">3A</text>
<text x="1143.0" y="468.1" text-anchor="middle" style="font-size:6.2px;fill:#c03a4a;font-style:italic;paint-order:stroke;stroke:#ffffff;stroke-width:1.4px;stroke-linejoin:round;stroke-opacity:0.75;">20</text>
<text x="1181.6" y="469.7" text-anchor="middle" style="font-size:6.2px;fill:#c03a4a;font-style:italic;paint-order:stroke;stroke:#ffffff;stroke-width:1.4px;stroke-linejoin:round;stroke-opacity:0.75;">23</text>
<text x="608.8" y="410.4" text-anchor="middle" style="font-size:5.8px;fill:#c03a4a;font-style:italic;paint-order:stroke;stroke:#ffffff;stroke-width:1.4px;stroke-linejoin:round;stroke-opacity:0.75;">3</text>
<text x="610.6" y="418.0" text-anchor="middle" style="font-size:5.8px;fill:#c03a4a;font-style:italic;paint-order:stroke;stroke:#ffffff;stroke-width:1.4px;stroke-linejoin:round;stroke-opacity:0.75;">59</text>
<text x="611.8" y="430.5" text-anchor="middle" style="font-size:5.8px;fill:#c03a4a;font-style:italic;paint-order:stroke;stroke:#ffffff;stroke-width:1.4px;stroke-linejoin:round;stroke-opacity:0.75;">58</text>
<text x="611.1" y="437.4" text-anchor="middle" style="font-size:5.8px;fill:#c03a4a;font-style:italic;paint-order:stroke;stroke:#ffffff;stroke-width:1.4px;stroke-linejoin:round;stroke-opacity:0.75;">58</text>
<text x="609.5" y="445.0" text-anchor="middle" style="font-size:5.8px;fill:#c03a4a;font-style:italic;paint-order:stroke;stroke:#ffffff;stroke-width:1.4px;stroke-linejoin:round;stroke-opacity:0.75;">7</text>
<text x="608.8" y="455.4" text-anchor="middle" style="font-size:5.8px;fill:#c03a4a;font-style:italic;paint-order:stroke;stroke:#ffffff;stroke-width:1.4px;stroke-linejoin:round;stroke-opacity:0.75;">7</text>
<text x="610.6" y="492.3" text-anchor="middle" style="font-size:5.8px;fill:#c03a4a;font-style:italic;paint-order:stroke;stroke:#ffffff;stroke-width:1.4px;stroke-linejoin:round;stroke-opacity:0.75;">48</text>
<text x="610.2" y="499.2" text-anchor="middle" style="font-size:5.8px;fill:#c03a4a;font-style:italic;paint-order:stroke;stroke:#ffffff;stroke-width:1.4px;stroke-linejoin:round;stroke-opacity:0.75;">43</text>
<path d="M1035.8,498.5 l0.8,2.2 l2.6,1.6 l0,0.8 l-2.6,-0.8 l0,1.6 l0.9,0.8 l-3.4,0 l0.9,-0.8 l0,-1.6 l-2.6,0.8 l0,-0.8 l2.6,-1.6 z" fill="#8461c4"/>
</g>
<rect x="613.9" y="309.8" width="16.1" height="32.2" rx="2" fill="#ffffff" fill-opacity="0.97" stroke="#e4e4e4" stroke-width="0.5"/>
<rect x="614.8" y="325.8" width="14.4" height="0.8" fill="#dcdcdc"/>
<path d="M619.2,318.2 h5.6 M622,315.4 v5.6" stroke="#3a3a3a" stroke-width="1.3" fill="none"/>
<path d="M619.4,334.2 h5.2" stroke="#3a3a3a" stroke-width="1.3" fill="none"/>
<circle cx="920.4" cy="386.1" r="6.6" fill="#5794f2"/>
<rect x="614.2" y="453.6" width="121" height="54.3" fill="#22252b"/>
<text x="621.2" y="473.3" textLength="81.2" lengthAdjust="spacing" style="font-size:12px;fill:#d2d2e0;stroke:#d2d2e0;stroke-width:0.3px">Node Positions</text>
<circle cx="636" cy="489.3" r="6.1" fill="#5794f2"/>
<rect x="1174.1" y="493.0" width="15.3" height="15.4" rx="2" fill="#ffffff" stroke="#e6e6e6" stroke-width="0.5"/>
<rect x="1180.5" y="495.9" width="2.6" height="1.9" rx="0.5" fill="#1d1d1d"/><rect x="1180.5" y="498.7" width="2.6" height="5.6" rx="0.4" fill="#1d1d1d"/>
</svg>
</body></html>
